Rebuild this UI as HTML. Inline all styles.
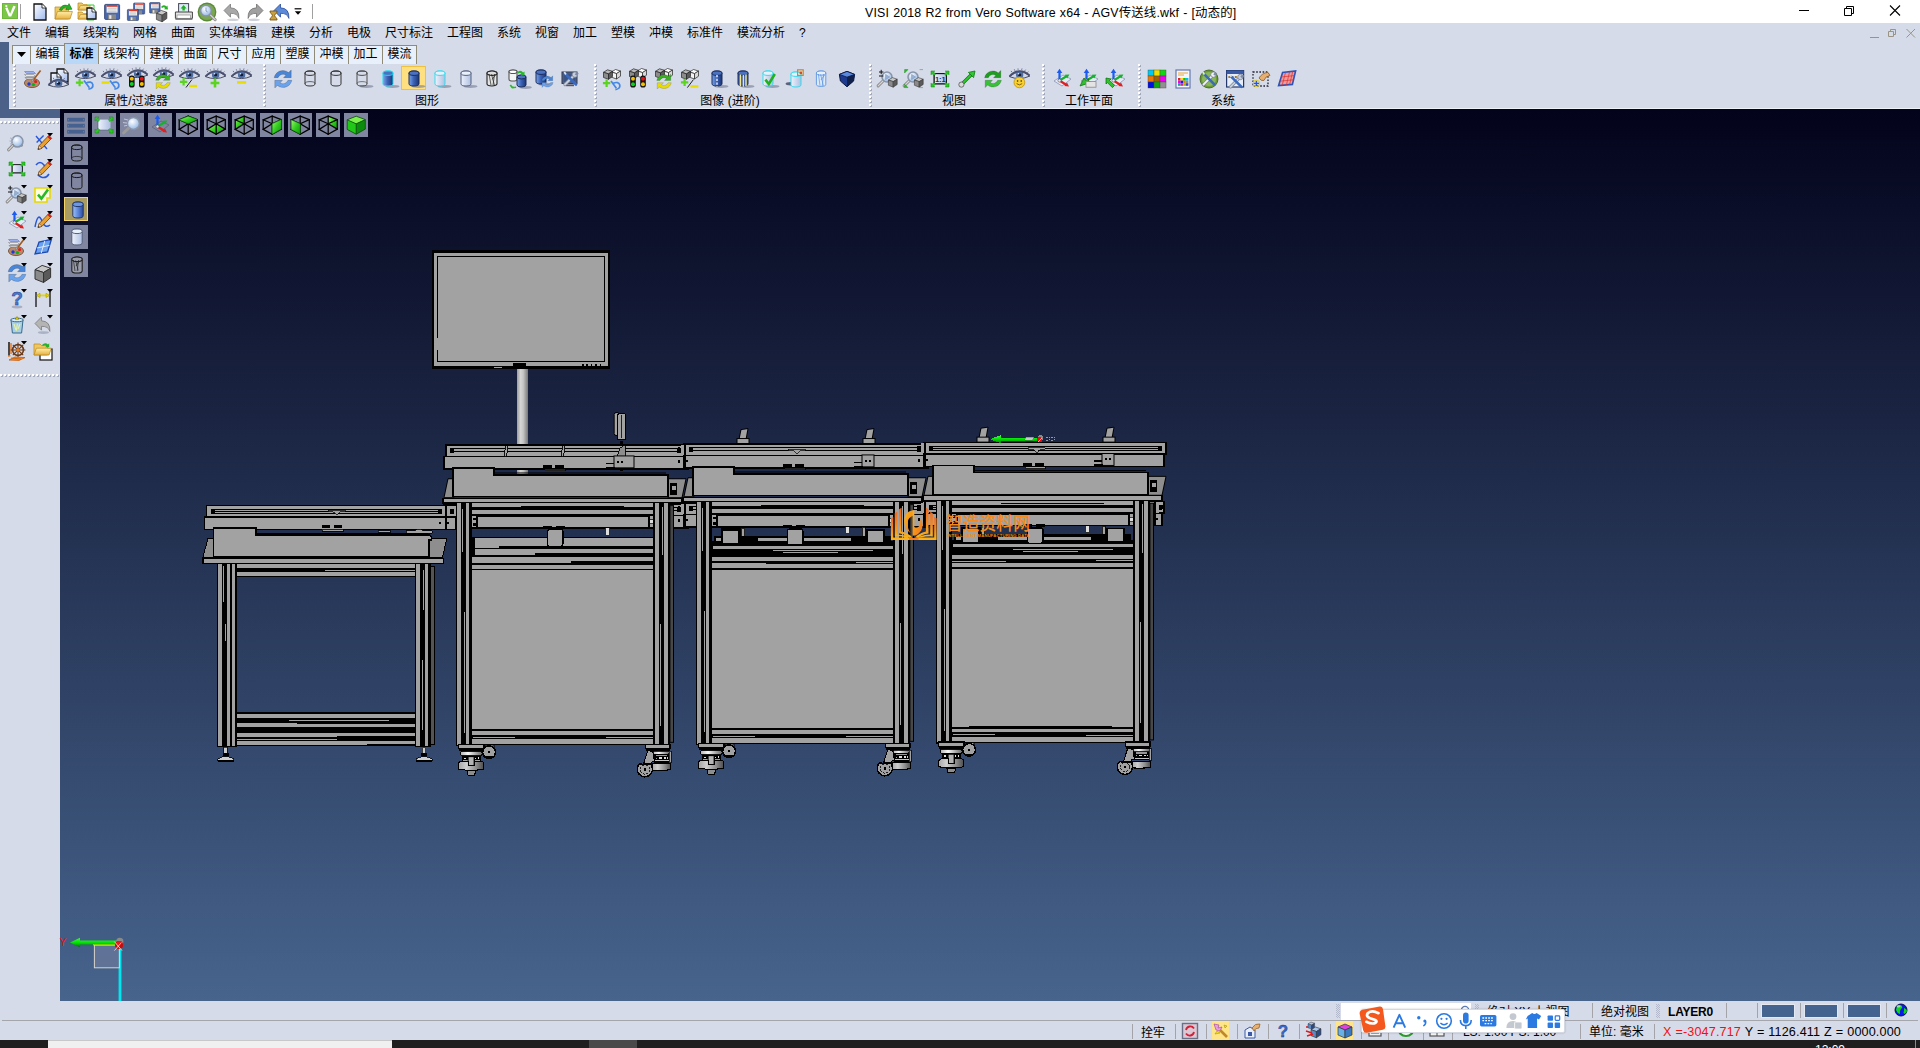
<!DOCTYPE html>
<html lang="zh-CN">
<head>
<meta charset="utf-8">
<title>VISI 2018 R2 from Vero Software x64 - AGV传送线.wkf - [动态的]</title>
<style>
*{box-sizing:border-box;margin:0;padding:0}
html,body{width:1920px;height:1048px;overflow:hidden;background:#d6dbe9;font-family:"Liberation Sans","Noto Sans CJK SC",sans-serif;font-size:12px;color:#000}
.abs{position:absolute}
svg{display:block;overflow:visible}
#title{left:0;top:0;width:1920px;height:23px;background:#fff}
#title .cap{position:absolute;left:865px;top:2.5px;font-size:12.4px;white-space:nowrap;letter-spacing:.18px;word-spacing:.4px}
#menubar{left:0;top:23px;width:1920px;height:21px;background:#d6dbe9}
#menubar span{position:absolute;top:1px;font-size:12px;line-height:18px;white-space:nowrap}
#blueL{left:0;top:42px;width:9px;height:76px;background:#4b6188}
#blueB{left:0;top:109px;width:60px;height:9px;background:#4b6188}
.tab{position:absolute;top:44.5px;height:19.5px;background:#e8f0fb;border:1px solid #8f8b76;border-bottom:none;font-size:12px;text-align:center;line-height:17px;white-space:nowrap}
.tab.act{top:42.5px;height:21.5px;background:#b9d8f8;font-weight:bold;line-height:20px}
#toolbar{left:9px;top:64px;width:1911px;height:45px;background:#d6dbe9;border-bottom:1px solid #eef1f8}
.glabel{position:absolute;top:93px;font-size:12px;line-height:16px;white-space:nowrap;transform:translateX(-50%)}
.gripv{position:absolute;top:64px;width:3px;height:44px;background:repeating-linear-gradient(to bottom,#fff 0 2px,transparent 2px 4px) 0 0/2px 100% no-repeat,repeating-linear-gradient(to bottom,transparent 0 1px,#a4a9ba 1px 3px,transparent 3px 4px) 1px 0/2px 100% no-repeat}
.griph{position:absolute;left:0;width:59px;height:3px;background:repeating-linear-gradient(to right,#fff 0 2px,transparent 2px 4px) 0 0/100% 2px no-repeat,repeating-linear-gradient(to right,transparent 0 1px,#a4a9ba 1px 3px,transparent 3px 4px) 0 1px/100% 2px no-repeat}
.ico{position:absolute;width:20px;height:20px}
#viewport{left:60px;top:109px;width:1860px;height:892px;background:linear-gradient(to bottom,#03031b 0%,#47648d 100%)}
.vbtn{position:absolute;width:24px;height:24px;background:#8085a0}
.vbtn.on{background:#a89c62;border:1px solid #f4d468}
#leftpanel{left:0;top:118px;width:60px;height:883px;background:#d6dbe9}
#status{left:0;top:1000px;width:1920px;height:40px;background:linear-gradient(to bottom,transparent 1px,#d6dbe9 1px)}
#status .t{position:absolute;font-size:12px;line-height:16px;white-space:nowrap}
#status .sep{position:absolute;width:1px;height:15px;background:#a3a3a8}
#taskbar{left:0;top:1040px;width:1920px;height:8px;background:#1f1f1f}
</style>
</head>
<body>
<svg width="0" height="0" style="position:absolute;left:0;top:0" aria-hidden="true"><defs><linearGradient id="gb" x1="0" x2="1"><stop offset="0" stop-color="#7aa4e8"/><stop offset=".45" stop-color="#3c64b8"/><stop offset="1" stop-color="#1c3474"/></linearGradient><linearGradient id="gb2" x1="0" x2="1"><stop offset="0" stop-color="#9cc0f8"/><stop offset=".5" stop-color="#5c88dc"/><stop offset="1" stop-color="#2a4a9c"/></linearGradient><linearGradient id="gl" x1="0" x2="1"><stop offset="0" stop-color="#eef3fc"/><stop offset="1" stop-color="#aebfe2"/></linearGradient><linearGradient id="gc" x1="0" x2="1" y1="0" y2="1"><stop offset="0" stop-color="#9cf870"/><stop offset=".5" stop-color="#34cc20"/><stop offset="1" stop-color="#0a9a0a"/></linearGradient><linearGradient id="gdoc" x1="0" x2="1" y1="0" y2="1"><stop offset="0" stop-color="#fff"/><stop offset="1" stop-color="#9cb8ee"/></linearGradient><linearGradient id="gfold" x1="0" x2="0" y1="0" y2="1"><stop offset="0" stop-color="#fff0a8"/><stop offset="1" stop-color="#e8b040"/></linearGradient><radialGradient id="glens" cx=".4" cy=".35" r=".7"><stop offset="0" stop-color="#fff"/><stop offset="1" stop-color="#8fb4e4"/></radialGradient></defs></svg>
<div id="title" class="abs"><svg class="abs" style="left:2px;top:3px" width="16" height="16" viewBox="0 0 17 17"><rect width="17" height="17" fill="#6cb83a"/><rect x="1" y="1" width="15" height="15" fill="#7cc648"/><path d="M3.4 5.4 l2.4 -.6 l2.8 6.6 l3.4 -8.4 l2.6 .8 l-4.8 10.6 h-2.6z" fill="#fff"/><circle cx="4.6" cy="3.2" r="1.2" fill="#fff"/></svg><div class="abs" style="left:20px;top:4px;width:1px;height:15px;background:#a0a0a0"></div><div class="ico" style="left:29.5px;top:1.5px"><svg width="20" height="20" viewBox="0 0 20 20"><path d="M4 2 h8 l4 4 v12 h-12z" fill="url(#gdoc)" stroke="#111" stroke-width="1.3"/><path d="M12 2 v4 h4" fill="#fff" stroke="#111" stroke-width=".8"/></svg></div><div class="ico" style="left:54px;top:1.5px"><svg width="20" height="20" viewBox="0 0 20 20"><path d="M1 17 v-12 h6.0 l1.5 1.6 h6.0 v10.4z" fill="#f0c860" stroke="#b88820" stroke-width=".7"/><path d="M1 17 l2.4 -7.4399999999999995 h15 l-2.4 7.4399999999999995z" fill="url(#gfold)" stroke="#b88820" stroke-width=".7"/><path d="M5.4 8 q2.4 -6.4 8.6 -4.4 l1 -2 l3 5.6 l-6.2 .6 l1 -2 q-3.6 -1 -5 2.6z" fill="#28b028" stroke="#0a6a0a" stroke-width=".5"/></svg></div><div class="ico" style="left:78px;top:1.5px"><svg width="20" height="20" viewBox="0 0 20 20"><path d="M0 8 v-7 h4.0 l1.5 1.6 h3.5 v5.4z" fill="#f0c860" stroke="#b88820" stroke-width=".7"/><path d="M0 8 l2.4 -4.34 h10 l-2.4 4.34z" fill="url(#gfold)" stroke="#b88820" stroke-width=".7"/><path d="M0 17 v-7 h4.0 l1.5 1.6 h3.5 v5.4z" fill="#f0c860" stroke="#b88820" stroke-width=".7"/><path d="M0 17 l2.4 -4.34 h10 l-2.4 4.34z" fill="url(#gfold)" stroke="#b88820" stroke-width=".7"/><path d="M9 3 h7 v15 h-7" fill="none" stroke="#38c838" stroke-width="1"/><path d="M9 6 h5 l4 4 v7 h-9z" fill="url(#gdoc)" stroke="#111" stroke-width="1.3"/><path d="M14 6 v4 h4" fill="#fff" stroke="#111" stroke-width=".8"/></svg></div><div class="ico" style="left:101.5px;top:1.5px"><svg width="20" height="20" viewBox="0 0 20 20"><g transform="translate(2.6 2.4) scale(1)"><rect x="0" y="0" width="15" height="15" rx="1" fill="#4868b0" stroke="#24386c" stroke-width=".8"/><rect x="2" y=".6" width="11" height="7.6" fill="#f4f4f4"/><rect x="2" y=".6" width="11" height="1.8" fill="#e03828"/><path d="M3 4 h9 M3 5.6 h9 M3 7.2 h9" stroke="#b0b0b0" stroke-width=".6"/><rect x="3.4" y="10" width="8" height="5" fill="#888"/><rect x="4.6" y="10.8" width="2.2" height="3.6" fill="#e8e8e8"/></g></svg></div><div class="ico" style="left:126px;top:1.5px"><svg width="20" height="20" viewBox="0 0 20 20"><g transform="translate(7.6 1) scale(0.74)"><rect x="0" y="0" width="15" height="15" rx="1" fill="#4868b0" stroke="#24386c" stroke-width=".8"/><rect x="2" y=".6" width="11" height="7.6" fill="#f4f4f4"/><rect x="2" y=".6" width="11" height="1.8" fill="#e03828"/><path d="M3 4 h9 M3 5.6 h9 M3 7.2 h9" stroke="#b0b0b0" stroke-width=".6"/><rect x="3.4" y="10" width="8" height="5" fill="#888"/><rect x="4.6" y="10.8" width="2.2" height="3.6" fill="#e8e8e8"/></g><g transform="translate(1.4 7.4) scale(0.74)"><rect x="0" y="0" width="15" height="15" rx="1" fill="#4868b0" stroke="#24386c" stroke-width=".8"/><rect x="2" y=".6" width="11" height="7.6" fill="#f4f4f4"/><rect x="2" y=".6" width="11" height="1.8" fill="#e03828"/><path d="M3 4 h9 M3 5.6 h9 M3 7.2 h9" stroke="#b0b0b0" stroke-width=".6"/><rect x="3.4" y="10" width="8" height="5" fill="#888"/><rect x="4.6" y="10.8" width="2.2" height="3.6" fill="#e8e8e8"/></g></svg></div><div class="ico" style="left:149px;top:1.5px"><svg width="20" height="20" viewBox="0 0 20 20"><g transform="translate(0.6 0.6) scale(0.7)"><rect x="0" y="0" width="15" height="15" rx="1" fill="#4868b0" stroke="#24386c" stroke-width=".8"/><rect x="2" y=".6" width="11" height="7.6" fill="#f4f4f4"/><rect x="2" y=".6" width="11" height="1.8" fill="#e03828"/><path d="M3 4 h9 M3 5.6 h9 M3 7.2 h9" stroke="#b0b0b0" stroke-width=".6"/><rect x="3.4" y="10" width="8" height="5" fill="#888"/><rect x="4.6" y="10.8" width="2.2" height="3.6" fill="#e8e8e8"/></g><g transform="translate(7.4 8.4) scale(0.95)"><path d="M0 3 l5 -3 l6 2 l-5 3z" fill="#c8c8c8" stroke="#333" stroke-width=".7"/><path d="M0 3 l6 2 v7 l-6 -2.4z" fill="#8a8a8a" stroke="#333" stroke-width=".7"/><path d="M6 5 l5 -3 v6.6 l-5 3.4z" fill="#5a5a5a" stroke="#333" stroke-width=".7"/></g><path d="M12 5 q2.4 -3.4 5.6 -.4 l.8 -1.2 l.6 4 l-4 -.2 l1.2 -1.2 q-1.6 -1.6 -3 0z" fill="#28b028"/></svg></div><div class="ico" style="left:174px;top:1.5px"><svg width="20" height="20" viewBox="0 0 20 20"><rect x="4.6" y="1.6" width="10" height="9" fill="#dceaf8" stroke="#445" stroke-width="1"/><path d="M9.6 3 l3 3.4 h-1.8 v2.2 h-2.4 v-2.2 h-1.8z" fill="#20b020"/><path d="M1.4 10 h17 v6.4 h-17z" fill="#e4e4e4" stroke="#444" stroke-width="1"/><rect x="3" y="13" width="13.4" height="3.2" fill="#fff" stroke="#666" stroke-width=".5"/><path d="M1.4 16.4 h17 v1.6 h-17z" fill="#888"/></svg></div><div class="ico" style="left:197px;top:1.5px"><svg width="20" height="20" viewBox="0 0 20 20"><circle cx="10" cy="10" r="9.4" fill="#5a8a38"/><circle cx="10" cy="10" r="8" fill="#7aa850"/><path d="M12.78 12.379999999999999 l5.4 5.4" stroke="#8a8a8a" stroke-width="3" stroke-linecap="round"/><path d="M12.78 12.379999999999999 l5.4 5.4" stroke="#d8d8d8" stroke-width="1.2" stroke-linecap="round"/><circle cx="9" cy="8.6" r="5.4" fill="url(#glens)" stroke="#8894a8" stroke-width="1.5"/><path d="M9 5.6 v3.4 l1.6 1" stroke="#6a8ab4" stroke-width=".8" fill="none"/></svg></div><div class="ico" style="left:222px;top:1.5px"><svg width="20" height="20" viewBox="0 0 20 20"><ellipse cx="11" cy="17.8" rx="6" ry="1.3" fill="#a0a4b4" opacity=".5"/><g><path d="M2 8.5 l6.5 -6.5 v3.8 q9 .4 8.4 10.6 q-1.6 -5.4 -8.4 -5 v3.8z" fill="#a8a8a8" stroke="#787878" stroke-width=".8"/></g></svg></div><div class="ico" style="left:244.5px;top:1.5px"><svg width="20" height="20" viewBox="0 0 20 20"><ellipse cx="9" cy="17.8" rx="6" ry="1.3" fill="#a0a4b4" opacity=".5"/><g transform="translate(20 0) scale(-1 1)"><path d="M2 8.5 l6.5 -6.5 v3.8 q9 .4 8.4 10.6 q-1.6 -5.4 -8.4 -5 v3.8z" fill="#a0a0a0" stroke="#707070" stroke-width=".8"/></g></svg></div><div class="ico" style="left:269px;top:1.5px"><svg width="20" height="20" viewBox="0 0 20 20"><g transform="translate(3 0)"><path d="M2 8.5 l6.5 -6.5 v3.8 q9 .4 8.4 10.6 q-1.6 -5.4 -8.4 -5 v3.8z" fill="#5a8ad8" stroke="#2a4a98" stroke-width=".8"/></g><path d="M1 9 h7 v1.4 q-2.4 2 -2.4 3 q0 1.4 2.4 3.2 v1.4 h-7 v-1.4 q2.4 -1.8 2.4 -3.2 q0 -1 -2.4 -3z" fill="#c8a040" stroke="#6a4a10" stroke-width=".8"/></svg></div><svg class="abs" style="left:294px;top:8px" width="8" height="8" viewBox="0 0 8 8"><path d="M.6 .8 h6.8" stroke="#000" stroke-width="1.2"/><path d="M.8 3.2 h6.4 l-3.2 3.6z" fill="#000"/></svg><div class="abs" style="left:312px;top:4px;width:1px;height:15px;background:#a0a0a0"></div><div class="cap">VISI 2018 R2 from Vero Software x64 - AGV传送线.wkf - [动态的]</div><svg class="abs" style="left:1790px;top:0" width="130" height="23" viewBox="0 0 130 23"><path d="M9 10.5 h10" stroke="#000" stroke-width="1"/><path d="M54.5 8.5 h7 v7 h-7z M56.5 8.5 v-2 h7 v7 h-2" fill="none" stroke="#000" stroke-width="1"/><path d="M100 5.5 l10 10 M110 5.5 l-10 10" stroke="#000" stroke-width="1.1"/></svg></div>
<div id="menubar" class="abs"><span style="left:7px">文件</span><span style="left:45px">编辑</span><span style="left:83px">线架构</span><span style="left:133px">网格</span><span style="left:171px">曲面</span><span style="left:209px">实体编辑</span><span style="left:271px">建模</span><span style="left:309px">分析</span><span style="left:347px">电极</span><span style="left:385px">尺寸标注</span><span style="left:447px">工程图</span><span style="left:497px">系统</span><span style="left:535px">视窗</span><span style="left:573px">加工</span><span style="left:611px">塑模</span><span style="left:649px">冲模</span><span style="left:687px">标准件</span><span style="left:737px">模流分析</span><span style="left:799px">?</span><svg class="abs" style="left:1866px;top:4px" width="50" height="14" viewBox="0 0 50 14"><path d="M4 10.5 h9" stroke="#9a9484" stroke-width="1"/><path d="M22.5 4.5 h5 v5 h-5z M24.5 4.500 v-2 h5 v5 h-2" fill="none" stroke="#9a9484" stroke-width="1"/><path d="M40.5 2 l8.500 8.500 M49 2 l-8.500 8.500" stroke="#9a9484" stroke-width="1"/></svg></div>
<div id="toolbar" class="abs"></div><div class="tab" style="left:12px;width:19px"><svg style="margin:6px auto 0" width="9" height="5" viewBox="0 0 9 5"><path d="M0 0 h9 l-4.5 5z" fill="#000"/></svg></div><div class="tab" style="left:30px;width:35px">编辑</div><div class="tab" style="left:98px;width:47px">线架构</div><div class="tab" style="left:144px;width:35px">建模</div><div class="tab" style="left:178px;width:35px">曲面</div><div class="tab" style="left:212px;width:35px">尺寸</div><div class="tab" style="left:246px;width:35px">应用</div><div class="tab" style="left:280px;width:35px">塑膜</div><div class="tab" style="left:314px;width:35px">冲模</div><div class="tab" style="left:348px;width:35px">加工</div><div class="tab" style="left:382px;width:35px">模流</div><div class="tab act" style="left:64px;width:35px">标准</div><div class="gripv" style="left:13px"></div><div class="gripv" style="left:263px"></div><div class="gripv" style="left:594px"></div><div class="gripv" style="left:869px"></div><div class="gripv" style="left:1042px"></div><div class="gripv" style="left:1138px"></div><div class="abs" style="left:401px;top:66px;width:25px;height:24px;background:#ffe080;border:1px solid #f0c040"></div><div class="ico" style="left:23px;top:68.6px"><svg width="20" height="20" viewBox="0 0 20 20"><g transform="translate(0 0)"><ellipse cx="9" cy="14" rx="7.6" ry="4.6" fill="#b88a6a" stroke="#6a4630" stroke-width=".8"/><circle cx="6" cy="15" r="1.7" fill="#1838e0"/><circle cx="10.4" cy="15.6" r="1.7" fill="#10b020"/><circle cx="12.6" cy="12.6" r="1.6" fill="#e02020"/><path d="M1.5 2.5 h9 l2 2 h-9z" fill="#9ab0f0" stroke="#5468b0" stroke-width=".5"/><path d="M1.5 5.5 h9 l2 2 h-9z" fill="#e8e8f0" stroke="#777" stroke-width=".5"/><path d="M2 8.5 h9 l2 2 h-9z" fill="#c8c8c8" stroke="#666" stroke-width=".5"/><path d="M9.5 12 L17.6 1.4" stroke="#a05a20" stroke-width="1.6"/><path d="M8.6 13.4 l2.2 -2.6 l-1.2 -.9z" fill="#e8e8e8" stroke="#555" stroke-width=".4"/></g></svg></div><div class="ico" style="left:49px;top:68.6px"><svg width="20" height="20" viewBox="0 0 20 20"><path d="M8 0 h7 l4 4 v9 h-11z" fill="url(#gdoc)" stroke="#111" stroke-width="1.3"/><path d="M15 0 v4 h4" fill="#fff" stroke="#111" stroke-width=".8"/><path d="M2 4 h6 l4 4 v8 h-10z" fill="url(#gdoc)" stroke="#111" stroke-width="1.3"/><path d="M8 4 v4 h4" fill="#fff" stroke="#111" stroke-width=".8"/><g transform="translate(-1.3 8.5) scale(1.0924999999999998 0.95)"><path d="M.6 8 Q10 -1.4 19.4 7.4 Q10 12.4 .6 8z" fill="#d4d8e6" stroke="#3a4058" stroke-width=".9"/><path d="M.8 7.6 Q9.6 -2.6 19 6.6" fill="none" stroke="#4a5070" stroke-width="1.9"/><path d="M3 3.4 l-.8 -1.400 M5.600 1.800 l-.5 -1.500 M8.600 .9 l-.1 -1.500 M11.800 .9 l.4 -1.500 M14.600 2 l.9 -1.300 M17 3.800 l1.100 -1" stroke="#4a5070" stroke-width=".7"/><circle cx="10" cy="6.2" r="3.4" fill="#4c6ca2"/><circle cx="10" cy="6.2" r="1.5" fill="#141c34"/><circle cx="8.9" cy="5.1" r=".8" fill="#dfe8ff"/></g></svg></div><div class="ico" style="left:75px;top:68.6px"><svg width="20" height="20" viewBox="0 0 20 20"><g transform="translate(-0.30000000000000004 0) scale(1.0924999999999998 0.95)"><path d="M.6 8 Q10 -1.4 19.4 7.4 Q10 12.4 .6 8z" fill="#d4d8e6" stroke="#3a4058" stroke-width=".9"/><path d="M.8 7.6 Q9.6 -2.6 19 6.6" fill="none" stroke="#4a5070" stroke-width="1.9"/><path d="M3 3.4 l-.8 -1.400 M5.600 1.800 l-.5 -1.500 M8.600 .9 l-.1 -1.500 M11.800 .9 l.4 -1.500 M14.600 2 l.9 -1.300 M17 3.800 l1.100 -1" stroke="#4a5070" stroke-width=".7"/><circle cx="10" cy="6.2" r="3.4" fill="#4c6ca2"/><circle cx="10" cy="6.2" r="1.5" fill="#141c34"/><circle cx="8.9" cy="5.1" r=".8" fill="#dfe8ff"/></g><path d="M0.8999999999999995 13.6 h7.4 M4.6 9.899999999999999 v7.4" stroke="#5ad41e" stroke-width="2.2" fill="none"/><path d="M10.6 14.2 q6 -2.800 7.200 1.400 q.6 3.800 -4.400 4.600" fill="none" stroke="#4488e4" stroke-width="1.700"/><path d="M9 11.6 l5.400 7.200" stroke="#4488e4" stroke-width="1.700"/></svg></div><div class="ico" style="left:101px;top:68.6px"><svg width="20" height="20" viewBox="0 0 20 20"><g transform="translate(-0.30000000000000004 0) scale(1.0924999999999998 0.95)"><path d="M.6 8 Q10 -1.4 19.4 7.4 Q10 12.4 .6 8z" fill="#d4d8e6" stroke="#3a4058" stroke-width=".9"/><path d="M.8 7.6 Q9.6 -2.6 19 6.6" fill="none" stroke="#4a5070" stroke-width="1.9"/><path d="M3 3.4 l-.8 -1.400 M5.600 1.800 l-.5 -1.500 M8.600 .9 l-.1 -1.500 M11.800 .9 l.4 -1.500 M14.600 2 l.9 -1.300 M17 3.800 l1.100 -1" stroke="#4a5070" stroke-width=".7"/><circle cx="10" cy="6.2" r="3.4" fill="#4c6ca2"/><circle cx="10" cy="6.2" r="1.5" fill="#141c34"/><circle cx="8.9" cy="5.1" r=".8" fill="#dfe8ff"/></g><path d="M0.5999999999999996 13.6 h8" stroke="#e8dc00" stroke-width="2.4" fill="none"/><path d="M10.6 14.2 q6 -2.800 7.200 1.400 q.6 3.800 -4.400 4.600" fill="none" stroke="#4488e4" stroke-width="1.700"/><path d="M9 11.6 l5.400 7.200" stroke="#4488e4" stroke-width="1.700"/></svg></div><div class="ico" style="left:127px;top:68.6px"><svg width="20" height="20" viewBox="0 0 20 20"><g transform="translate(-0.30000000000000004 -1) scale(1.0924999999999998 0.95)"><path d="M.6 8 Q10 -1.4 19.4 7.4 Q10 12.4 .6 8z" fill="#d4d8e6" stroke="#3a4058" stroke-width=".9"/><path d="M.8 7.6 Q9.6 -2.6 19 6.6" fill="none" stroke="#4a5070" stroke-width="1.9"/><path d="M3 3.4 l-.8 -1.400 M5.600 1.800 l-.5 -1.500 M8.600 .9 l-.1 -1.500 M11.800 .9 l.4 -1.500 M14.600 2 l.9 -1.300 M17 3.800 l1.100 -1" stroke="#4a5070" stroke-width=".7"/><circle cx="10" cy="6.2" r="3.4" fill="#4c6ca2"/><circle cx="10" cy="6.2" r="1.5" fill="#141c34"/><circle cx="8.9" cy="5.1" r=".8" fill="#dfe8ff"/></g><rect x="2" y="6.5" width="5.6" height="12" rx="2.6" fill="#111"/><circle cx="4.8" cy="9.7" r="2" fill="#f4c000"/><circle cx="4.8" cy="15.1" r="2" fill="#10d020"/><rect x="12" y="6.5" width="5.6" height="12" rx="2.6" fill="#111"/><circle cx="14.8" cy="9.7" r="2" fill="#e81010"/><circle cx="14.8" cy="15.1" r="2" fill="#f4c000"/></svg></div><div class="ico" style="left:153px;top:68.6px"><svg width="20" height="20" viewBox="0 0 20 20"><g transform="translate(-0.30000000000000004 -1) scale(1.0924999999999998 0.95)"><path d="M.6 8 Q10 -1.4 19.4 7.4 Q10 12.4 .6 8z" fill="#d4d8e6" stroke="#3a4058" stroke-width=".9"/><path d="M.8 7.6 Q9.6 -2.6 19 6.6" fill="none" stroke="#4a5070" stroke-width="1.9"/><path d="M3 3.4 l-.8 -1.400 M5.600 1.800 l-.5 -1.500 M8.600 .9 l-.1 -1.500 M11.800 .9 l.4 -1.500 M14.600 2 l.9 -1.300 M17 3.800 l1.100 -1" stroke="#4a5070" stroke-width=".7"/><circle cx="10" cy="6.2" r="3.4" fill="#4c6ca2"/><circle cx="10" cy="6.2" r="1.5" fill="#141c34"/><circle cx="8.9" cy="5.1" r=".8" fill="#dfe8ff"/></g><g transform="translate(10 12.5) scale(0.868) translate(-10 -10)"><path d="M1.6 8.7 A8.5 8.5 0 0 1 15.3 3.9 L17.8 1.4 V8.7 H10.5 L12.8 6.4 A5 5 0 0 0 5.3 8.7z" fill="#3ab020" stroke="#00000055" stroke-width=".5"/><path d="M1.6 8.7 A8.5 8.5 0 0 1 15.3 3.9 L17.8 1.4 V8.7 H10.5 L12.8 6.4 A5 5 0 0 0 5.3 8.7z" fill="#e8dc00" stroke="#00000055" stroke-width=".5" transform="rotate(180 10 10)"/></g></svg></div><div class="ico" style="left:179px;top:68.6px"><svg width="20" height="20" viewBox="0 0 20 20"><g transform="translate(-0.30000000000000004 0) scale(1.0924999999999998 0.95)"><path d="M.6 8 Q10 -1.4 19.4 7.4 Q10 12.4 .6 8z" fill="#d4d8e6" stroke="#3a4058" stroke-width=".9"/><path d="M.8 7.6 Q9.6 -2.6 19 6.6" fill="none" stroke="#4a5070" stroke-width="1.9"/><path d="M3 3.4 l-.8 -1.400 M5.600 1.800 l-.5 -1.500 M8.600 .9 l-.1 -1.500 M11.800 .9 l.4 -1.500 M14.600 2 l.9 -1.300 M17 3.800 l1.100 -1" stroke="#4a5070" stroke-width=".7"/><circle cx="10" cy="6.2" r="3.4" fill="#4c6ca2"/><circle cx="10" cy="6.2" r="1.5" fill="#141c34"/><circle cx="8.9" cy="5.1" r=".8" fill="#dfe8ff"/></g><path d="M0.8999999999999995 12.8 h7.4 M4.6 9.100000000000001 v7.4" stroke="#5ad41e" stroke-width="2.2" fill="none"/><path d="M10 17 h8" stroke="#e8dc00" stroke-width="2.4" fill="none"/><path d="M7 18.5 l6 -8" stroke="#222" stroke-width="1"/></svg></div><div class="ico" style="left:205px;top:68.6px"><svg width="20" height="20" viewBox="0 0 20 20"><g transform="translate(-0.30000000000000004 0) scale(1.0924999999999998 0.95)"><path d="M.6 8 Q10 -1.4 19.4 7.4 Q10 12.4 .6 8z" fill="#d4d8e6" stroke="#3a4058" stroke-width=".9"/><path d="M.8 7.6 Q9.6 -2.6 19 6.6" fill="none" stroke="#4a5070" stroke-width="1.9"/><path d="M3 3.4 l-.8 -1.400 M5.600 1.800 l-.5 -1.500 M8.600 .9 l-.1 -1.500 M11.800 .9 l.4 -1.500 M14.600 2 l.9 -1.300 M17 3.800 l1.100 -1" stroke="#4a5070" stroke-width=".7"/><circle cx="10" cy="6.2" r="3.4" fill="#4c6ca2"/><circle cx="10" cy="6.2" r="1.5" fill="#141c34"/><circle cx="8.9" cy="5.1" r=".8" fill="#dfe8ff"/></g><path d="M5.6 14 h8.8 M10 9.6 v8.8" stroke="#5ad41e" stroke-width="2.6" fill="none"/></svg></div><div class="ico" style="left:231px;top:68.6px"><svg width="20" height="20" viewBox="0 0 20 20"><g transform="translate(-0.30000000000000004 0) scale(1.0924999999999998 0.95)"><path d="M.6 8 Q10 -1.4 19.4 7.4 Q10 12.4 .6 8z" fill="#d4d8e6" stroke="#3a4058" stroke-width=".9"/><path d="M.8 7.6 Q9.6 -2.6 19 6.6" fill="none" stroke="#4a5070" stroke-width="1.9"/><path d="M3 3.4 l-.8 -1.400 M5.600 1.800 l-.5 -1.500 M8.600 .9 l-.1 -1.500 M11.800 .9 l.4 -1.500 M14.600 2 l.9 -1.300 M17 3.800 l1.100 -1" stroke="#4a5070" stroke-width=".7"/><circle cx="10" cy="6.2" r="3.4" fill="#4c6ca2"/><circle cx="10" cy="6.2" r="1.5" fill="#141c34"/><circle cx="8.9" cy="5.1" r=".8" fill="#dfe8ff"/></g><path d="M6.0 13.4 h9.2" stroke="#e8dc00" stroke-width="2.6" fill="none"/></svg></div><div class="glabel" style="left:136px">属性/过滤器</div><div class="ico" style="left:273px;top:68.6px"><svg width="20" height="20" viewBox="0 0 20 20"><g transform="translate(10 10) scale(1.053) translate(-10 -10)"><path d="M1.6 8.7 A8.5 8.5 0 0 1 15.3 3.9 L17.8 1.4 V8.7 H10.5 L12.8 6.4 A5 5 0 0 0 5.3 8.7z" fill="#4a86d8" stroke="#00000055" stroke-width=".5"/><path d="M1.6 8.7 A8.5 8.5 0 0 1 15.3 3.9 L17.8 1.4 V8.7 H10.5 L12.8 6.4 A5 5 0 0 0 5.3 8.7z" fill="#6aa2ec" stroke="#00000055" stroke-width=".5" transform="rotate(180 10 10)"/></g></svg></div><div class="ico" style="left:300px;top:68.6px"><svg width="20" height="20" viewBox="0 0 20 20"><path d="M5 4.2 v10.6 a5.0 2.2 0 0 0 10 0 v-10.6 a5.0 2.2 0 0 0 -10 0z" fill="none" stroke="#2a2a2a" stroke-width="0.95"/><ellipse cx="10.0" cy="4.2" rx="5.0" ry="2.2" fill="none" stroke="#2a2a2a" stroke-width="0.95"/><path d="M5 14.8 a5.0 2.2 0 0 1 10 0" fill="none" stroke="#2a2a2a" stroke-width="0.6649999999999999"/></svg></div><div class="ico" style="left:326px;top:68.6px"><svg width="20" height="20" viewBox="0 0 20 20"><path d="M5 4.2 v10.6 a5.0 2.2 0 0 0 10 0 v-10.6 a5.0 2.2 0 0 0 -10 0z" fill="none" stroke="#2a2a2a" stroke-width="0.95"/><ellipse cx="10.0" cy="4.2" rx="5.0" ry="2.2" fill="none" stroke="#2a2a2a" stroke-width="0.95"/></svg></div><div class="ico" style="left:352px;top:68.6px"><svg width="20" height="20" viewBox="0 0 20 20"><ellipse cx="14.5" cy="17.4" rx="7.0" ry="1.5" fill="#6a7088" opacity=".55"/><path d="M5 4.2 v10.6 a5.0 2.2 0 0 0 10 0 v-10.6 a5.0 2.2 0 0 0 -10 0z" fill="none" stroke="#444" stroke-width="0.95"/><ellipse cx="10.0" cy="4.2" rx="5.0" ry="2.2" fill="none" stroke="#444" stroke-width="0.95"/><path d="M5 14.8 a5.0 2.2 0 0 1 10 0" fill="none" stroke="#444" stroke-width="0.6649999999999999"/></svg></div><div class="ico" style="left:378px;top:68.6px"><svg width="20" height="20" viewBox="0 0 20 20"><ellipse cx="14.5" cy="17.4" rx="7.0" ry="1.5" fill="#6a7088" opacity=".55"/><path d="M5 4.2 v10.6 a5.0 2.2 0 0 0 10 0 v-10.6 a5.0 2.2 0 0 0 -10 0z" fill="url(#gb)" stroke="#18dcf0" stroke-width="1.0"/><ellipse cx="10.0" cy="4.2" rx="5.0" ry="2.2" fill="#4a72c0" stroke="#18dcf0" stroke-width="1.0"/></svg></div><div class="ico" style="left:403.5px;top:68.6px"><svg width="20" height="20" viewBox="0 0 20 20"><ellipse cx="14.5" cy="17.4" rx="7.0" ry="1.5" fill="#6a7088" opacity=".55"/><path d="M5 4.2 v10.6 a5.0 2.2 0 0 0 10 0 v-10.6 a5.0 2.2 0 0 0 -10 0z" fill="url(#gb)" stroke="#1a2c5c" stroke-width="1.0"/><ellipse cx="10.0" cy="4.2" rx="5.0" ry="2.2" fill="#4a72c0" stroke="#1a2c5c" stroke-width="1.0"/></svg></div><div class="ico" style="left:430px;top:68.6px"><svg width="20" height="20" viewBox="0 0 20 20"><ellipse cx="14.5" cy="17.4" rx="7.0" ry="1.5" fill="#6a7088" opacity=".55"/><path d="M5 4.2 v10.6 a5.0 2.2 0 0 0 10 0 v-10.6 a5.0 2.2 0 0 0 -10 0z" fill="url(#gl)" stroke="#30dcec" stroke-width="1.0"/><ellipse cx="10.0" cy="4.2" rx="5.0" ry="2.2" fill="#e8f0fc" stroke="#30dcec" stroke-width="1.0"/></svg></div><div class="ico" style="left:456px;top:68.6px"><svg width="20" height="20" viewBox="0 0 20 20"><ellipse cx="14.5" cy="17.4" rx="7.0" ry="1.5" fill="#6a7088" opacity=".55"/><path d="M5 4.2 v10.6 a5.0 2.2 0 0 0 10 0 v-10.6 a5.0 2.2 0 0 0 -10 0z" fill="url(#gl)" stroke="#55607c" stroke-width="1.0"/><ellipse cx="10.0" cy="4.2" rx="5.0" ry="2.2" fill="#e8f0fc" stroke="#55607c" stroke-width="1.0"/></svg></div><div class="ico" style="left:482px;top:68.6px"><svg width="20" height="20" viewBox="0 0 20 20"><path d="M5 4.2 v10.6 a5.0 2.2 0 0 0 10 0 v-10.6 a5.0 2.2 0 0 0 -10 0z" fill="#e4e4e4" stroke="#222" stroke-width="1.1"/><ellipse cx="10.0" cy="4.2" rx="5.0" ry="2.2" fill="#ddd" stroke="#222" stroke-width="1.1"/><path d="M7 5 l2 11 M9.5 5.4 l3 11 M12.6 5 l-1.6 11.4 M13.8 5.4 l-3.6 5" stroke="#222" stroke-width=".7" fill="none"/></svg></div><div class="ico" style="left:508px;top:68.6px"><svg width="20" height="20" viewBox="0 0 20 20"><path d="M1 2.76 v7.48 a4.0 1.76 0 0 0 8 0 v-7.48 a4.0 1.76 0 0 0 -8 0z" fill="#f4f4f4" stroke="#555" stroke-width="1.1"/><ellipse cx="5.0" cy="2.76" rx="4.0" ry="1.76" fill="#fff" stroke="#555" stroke-width="1.1"/><ellipse cx="17.549999999999997" cy="18.4" rx="6.3" ry="1.5" fill="#6a7088" opacity=".55"/><path d="M9 7.98 v8.04 a4.5 1.98 0 0 0 9 0 v-8.04 a4.5 1.98 0 0 0 -9 0z" fill="url(#gb)" stroke="#1a2c5c" stroke-width="1.0"/><ellipse cx="13.5" cy="7.98" rx="4.5" ry="1.98" fill="#4a72c0" stroke="#1a2c5c" stroke-width="1.0"/><path d="M9.5 3 q3.4 -2.8 5.6 .6 l1.4 -1 v4 h-4 l1.2 -1.2 q-1.4 -2.2 -3.6 -.8z" fill="#28b828"/><path d="M3 15.4 q1.4 3.4 5 2 l.2 1.6 l-4.2 .6 l-2.4 -3.2z" fill="#28b828"/></svg></div><div class="ico" style="left:534px;top:68.6px"><svg width="20" height="20" viewBox="0 0 20 20"><ellipse cx="11.5" cy="15.4" rx="7.0" ry="1.5" fill="#6a7088" opacity=".55"/><path d="M2 3.2 v9.6 a5.0 2.2 0 0 0 10 0 v-9.6 a5.0 2.2 0 0 0 -10 0z" fill="url(#gb)" stroke="#1a2c5c" stroke-width="1.0"/><ellipse cx="7.0" cy="3.2" rx="5.0" ry="2.2" fill="#4a72c0" stroke="#1a2c5c" stroke-width="1.0"/><g transform="translate(13.4 12.6) scale(0.684) translate(-10 -10)"><path d="M1.6 8.7 A8.5 8.5 0 0 1 15.3 3.9 L17.8 1.4 V8.7 H10.5 L12.8 6.4 A5 5 0 0 0 5.3 8.7z" fill="#4a86d8" stroke="#00000055" stroke-width=".5"/><path d="M1.6 8.7 A8.5 8.5 0 0 1 15.3 3.9 L17.8 1.4 V8.7 H10.5 L12.8 6.4 A5 5 0 0 0 5.3 8.7z" fill="#6aa2ec" stroke="#00000055" stroke-width=".5" transform="rotate(180 10 10)"/></g></svg></div><div class="ico" style="left:560px;top:68.6px"><svg width="20" height="20" viewBox="0 0 20 20"><rect x="2" y="3" width="15" height="11.4" fill="#5a6a88" stroke="#2a3450" stroke-width="1"/><rect x="3.4" y="4.4" width="12.2" height="8.6" fill="#3c5484"/><rect x="6" y="15.4" width="8" height="1.8" fill="#556"/><path d="M5.0 15.5 L14.5 6" stroke="#7a8496" stroke-width="3.2" stroke-linecap="round"/><path d="M5.0 15.5 L14.5 6" stroke="#c8d0dc" stroke-width="1.8" stroke-linecap="round"/><circle cx="14.9" cy="5.6" r="2.7" fill="#c8d0dc" stroke="#7a8496" stroke-width=".8"/><rect x="14.5" y="2.2" width="2.4" height="3.2" fill="#7a8aa8" transform="rotate(45 14.9 5.6)"/><path d="M16.0 15.5 L5.9 5.4" stroke="#3a6ac0" stroke-width="2.6" stroke-linecap="round"/><path d="M5.9 5.4 l-1.6 -2.4" stroke="#dfe4ec" stroke-width="1.8"/></svg></div><div class="glabel" style="left:427px">图形</div><div class="ico" style="left:602px;top:68.6px"><svg width="20" height="20" viewBox="0 0 20 20"><g transform="translate(0 0)"><path d="M9.5 3.0 l4 -2.5 l5 1.5 l-4 2.6z" fill="#fff" stroke="#222" stroke-width=".7"/><path d="M9.5 3.0 l5 1.6 v5.4 l-5 -1.8z" fill="#f4f4f4" stroke="#222" stroke-width=".7"/><path d="M14.5 4.6 l4 -2.6 v5.2 l-4 2.8z" fill="#d8d8d8" stroke="#222" stroke-width=".7"/><path d="M1.5 3.3 l4 -2.5 l5 1.5 l-4 2.6z" fill="#b8b8b8" stroke="#222" stroke-width=".7"/><path d="M1.5 3.3 l5 1.6 v5.4 l-5 -1.8z" fill="#8c8c8c" stroke="#222" stroke-width=".7"/><path d="M6.5 4.8999999999999995 l4 -2.6 v5.2 l-4 2.8z" fill="#5c5c5c" stroke="#222" stroke-width=".7"/></g><path d="M0.8999999999999995 14.2 h7.4 M4.6 10.5 v7.4" stroke="#5ad41e" stroke-width="2.2" fill="none"/><path d="M10.6 14.6 q6 -2.800 7.200 1.400 q.6 3.800 -4.400 4.600" fill="none" stroke="#4488e4" stroke-width="1.700"/><path d="M9 12.0 l5.400 7.200" stroke="#4488e4" stroke-width="1.700"/></svg></div><div class="ico" style="left:628px;top:68.6px"><svg width="20" height="20" viewBox="0 0 20 20"><g transform="translate(0 -1)"><path d="M9.5 3.0 l4 -2.5 l5 1.5 l-4 2.6z" fill="#fff" stroke="#222" stroke-width=".7"/><path d="M9.5 3.0 l5 1.6 v5.4 l-5 -1.8z" fill="#f4f4f4" stroke="#222" stroke-width=".7"/><path d="M14.5 4.6 l4 -2.6 v5.2 l-4 2.8z" fill="#d8d8d8" stroke="#222" stroke-width=".7"/><path d="M1.5 3.3 l4 -2.5 l5 1.5 l-4 2.6z" fill="#b8b8b8" stroke="#222" stroke-width=".7"/><path d="M1.5 3.3 l5 1.6 v5.4 l-5 -1.8z" fill="#8c8c8c" stroke="#222" stroke-width=".7"/><path d="M6.5 4.8999999999999995 l4 -2.6 v5.2 l-4 2.8z" fill="#5c5c5c" stroke="#222" stroke-width=".7"/></g><rect x="2.2" y="6.6" width="5.6" height="12" rx="2.6" fill="#111"/><circle cx="5.0" cy="9.8" r="2" fill="#f4c000"/><circle cx="5.0" cy="15.2" r="2" fill="#10d020"/><rect x="12.2" y="6.6" width="5.6" height="12" rx="2.6" fill="#111"/><circle cx="15.0" cy="9.8" r="2" fill="#e81010"/><circle cx="15.0" cy="15.2" r="2" fill="#f4c000"/></svg></div><div class="ico" style="left:654px;top:68.6px"><svg width="20" height="20" viewBox="0 0 20 20"><g transform="translate(0 -1)"><path d="M9.5 3.0 l4 -2.5 l5 1.5 l-4 2.6z" fill="#fff" stroke="#222" stroke-width=".7"/><path d="M9.5 3.0 l5 1.6 v5.4 l-5 -1.8z" fill="#f4f4f4" stroke="#222" stroke-width=".7"/><path d="M14.5 4.6 l4 -2.6 v5.2 l-4 2.8z" fill="#d8d8d8" stroke="#222" stroke-width=".7"/><path d="M1.5 3.3 l4 -2.5 l5 1.5 l-4 2.6z" fill="#b8b8b8" stroke="#222" stroke-width=".7"/><path d="M1.5 3.3 l5 1.6 v5.4 l-5 -1.8z" fill="#8c8c8c" stroke="#222" stroke-width=".7"/><path d="M6.5 4.8999999999999995 l4 -2.6 v5.2 l-4 2.8z" fill="#5c5c5c" stroke="#222" stroke-width=".7"/></g><g transform="translate(10 12.6) scale(0.868) translate(-10 -10)"><path d="M1.6 8.7 A8.5 8.5 0 0 1 15.3 3.9 L17.8 1.4 V8.7 H10.5 L12.8 6.4 A5 5 0 0 0 5.3 8.7z" fill="#3ab020" stroke="#00000055" stroke-width=".5"/><path d="M1.6 8.7 A8.5 8.5 0 0 1 15.3 3.9 L17.8 1.4 V8.7 H10.5 L12.8 6.4 A5 5 0 0 0 5.3 8.7z" fill="#e8dc00" stroke="#00000055" stroke-width=".5" transform="rotate(180 10 10)"/></g></svg></div><div class="ico" style="left:680px;top:68.6px"><svg width="20" height="20" viewBox="0 0 20 20"><g transform="translate(0 0)"><path d="M9.5 3.0 l4 -2.5 l5 1.5 l-4 2.6z" fill="#fff" stroke="#222" stroke-width=".7"/><path d="M9.5 3.0 l5 1.6 v5.4 l-5 -1.8z" fill="#f4f4f4" stroke="#222" stroke-width=".7"/><path d="M14.5 4.6 l4 -2.6 v5.2 l-4 2.8z" fill="#d8d8d8" stroke="#222" stroke-width=".7"/><path d="M1.5 3.3 l4 -2.5 l5 1.5 l-4 2.6z" fill="#b8b8b8" stroke="#222" stroke-width=".7"/><path d="M1.5 3.3 l5 1.6 v5.4 l-5 -1.8z" fill="#8c8c8c" stroke="#222" stroke-width=".7"/><path d="M6.5 4.8999999999999995 l4 -2.6 v5.2 l-4 2.8z" fill="#5c5c5c" stroke="#222" stroke-width=".7"/></g><path d="M0.8999999999999995 13.4 h7.4 M4.6 9.7 v7.4" stroke="#5ad41e" stroke-width="2.2" fill="none"/><path d="M10.4 17.4 h8" stroke="#e8dc00" stroke-width="2.4" fill="none"/><path d="M7.4 18.6 l6 -8" stroke="#222" stroke-width="1"/></svg></div><div class="ico" style="left:707px;top:68.6px"><svg width="20" height="20" viewBox="0 0 20 20"><ellipse cx="14.5" cy="17.4" rx="7.0" ry="1.5" fill="#6a7088" opacity=".55"/><path d="M5 4.2 v10.6 a5.0 2.2 0 0 0 10 0 v-10.6 a5.0 2.2 0 0 0 -10 0z" fill="url(#gb)" stroke="#1a2c5c" stroke-width="1.0"/><ellipse cx="10.0" cy="4.2" rx="5.0" ry="2.2" fill="#4a72c0" stroke="#1a2c5c" stroke-width="1.0"/><path d="M10 6 v12" stroke="#fff" stroke-width="1.3" stroke-dasharray="2.2 1.6"/></svg></div><div class="ico" style="left:733px;top:68.6px"><svg width="20" height="20" viewBox="0 0 20 20"><ellipse cx="14.5" cy="17.4" rx="7.0" ry="1.5" fill="#6a7088" opacity=".55"/><path d="M5 4.2 v10.6 a5.0 2.2 0 0 0 10 0 v-10.6 a5.0 2.2 0 0 0 -10 0z" fill="#3c5aa8" stroke="#1a2c5c" stroke-width="1"/><ellipse cx="10.0" cy="4.2" rx="5.0" ry="2.2" fill="#4a72c0" stroke="#1a2c5c" stroke-width="1"/><path d="M7.4 5.6 v11.6 M10.4 6 v11.8 M13 5.6 v11.4" stroke="#f0e890" stroke-width="1.4"/></svg></div><div class="ico" style="left:759px;top:68.6px"><svg width="20" height="20" viewBox="0 0 20 20"><ellipse cx="13.5" cy="17.4" rx="7.0" ry="1.5" fill="#6a7088" opacity=".55"/><path d="M4 4.2 v10.6 a5.0 2.2 0 0 0 10 0 v-10.6 a5.0 2.2 0 0 0 -10 0z" fill="url(#gl)" stroke="#30dcec" stroke-width="1"/><ellipse cx="9.0" cy="4.2" rx="5.0" ry="2.2" fill="#e8f0fc" stroke="#30dcec" stroke-width="1"/><path d="M6.4 10.6 l3.4 4.4 l6 -10" fill="none" stroke="#20b020" stroke-width="2.6"/></svg></div><div class="ico" style="left:785px;top:68.6px"><svg width="20" height="20" viewBox="0 0 20 20"><ellipse cx="6" cy="14.8" rx="5.4" ry="1.7" fill="#303a58" opacity=".75"/><path d="M6 5.2 v10.6 a5.0 2.2 0 0 0 10 0 v-10.6 a5.0 2.2 0 0 0 -10 0z" fill="url(#gl)" stroke="#30dcec" stroke-width="1"/><ellipse cx="11.0" cy="5.2" rx="5.0" ry="2.2" fill="#e8f0fc" stroke="#30dcec" stroke-width="1"/><rect x="12.6" y=".8" width="5.6" height="5.6" fill="none" stroke="#d08820" stroke-width="1.2"/><rect x="14.6" y="2.6" width="2.4" height="2.4" fill="#e04820"/></svg></div><div class="ico" style="left:811px;top:68.6px"><svg width="20" height="20" viewBox="0 0 20 20"><path d="M5.4 4.068 v11.264 a4.7 2.068 0 0 0 9.4 0 v-11.264 a4.7 2.068 0 0 0 -9.4 0z" fill="#dceafc" stroke="#5a94e0" stroke-width="0.9"/><ellipse cx="10.100000000000001" cy="4.068" rx="4.7" ry="2.068" fill="#e8f2ff" stroke="#5a94e0" stroke-width="0.9"/><path d="M7.4 5 l1.6 11.6 M9.6 5.4 l2.8 11.4 M12.6 5 l-1.4 12 M13.6 6 l-3.6 5" stroke="#5a94e0" stroke-width=".7" fill="none"/></svg></div><div class="ico" style="left:837px;top:68.6px"><svg width="20" height="20" viewBox="0 0 20 20"><path d="M2.4 5.4 L10 2.4 l7.6 3 l-1 6.6 L10 17.8 L3.4 12z" fill="#1c3a90" stroke="#0a1640" stroke-width="1"/><path d="M2.4 5.4 L10 2.4 l7.6 3 L10 8.2z" fill="#5a8ae0" stroke="#0a1640" stroke-width=".8"/><path d="M10 8.2 V17.8 L16.6 12 l1 -6.6z" fill="#10204c"/></svg></div><div class="glabel" style="left:730px">图像 (进阶)</div><div class="ico" style="left:878px;top:68.6px"><svg width="20" height="20" viewBox="0 0 20 20"><path d="M5.5 11.5 l-5.4 5.4" stroke="#8a8a8a" stroke-width="3" stroke-linecap="round"/><path d="M5.5 11.5 l-5.4 5.4" stroke="#d8d8d8" stroke-width="1.2" stroke-linecap="round"/><circle cx="9" cy="8" r="5" fill="url(#glens)" stroke="#8894a8" stroke-width="1.5"/><g transform="translate(10.4 8.6) scale(0.8)"><path d="M0 3 l5 -3 l6 2 l-5 3z" fill="#c8c8c8" stroke="#333" stroke-width=".7"/><path d="M0 3 l6 2 v7 l-6 -2.4z" fill="#8a8a8a" stroke="#333" stroke-width=".7"/><path d="M6 5 l5 -3 v6.6 l-5 3.4z" fill="#5a5a5a" stroke="#333" stroke-width=".7"/></g><path d="M1 3 h4.4 M3.2 .8 v4.4 M1 7 h4.4" stroke="#111" stroke-width="1"/><path d="M7.6 5.4 l4 2.6 l-4 2.6z" fill="#9ab4d8" stroke="#6a84a8" stroke-width=".5"/></svg></div><div class="ico" style="left:904px;top:68.6px"><svg width="20" height="20" viewBox="0 0 20 20"><path d="M5.5 11.5 l-5.4 5.4" stroke="#8a8a8a" stroke-width="3" stroke-linecap="round"/><path d="M5.5 11.5 l-5.4 5.4" stroke="#d8d8d8" stroke-width="1.2" stroke-linecap="round"/><circle cx="9" cy="8" r="5" fill="url(#glens)" stroke="#8894a8" stroke-width="1.5"/><g transform="translate(10.4 8.6) scale(0.8)"><path d="M0 3 l5 -3 l6 2 l-5 3z" fill="#c8c8c8" stroke="#333" stroke-width=".7"/><path d="M0 3 l6 2 v7 l-6 -2.4z" fill="#8a8a8a" stroke="#333" stroke-width=".7"/><path d="M6 5 l5 -3 v6.6 l-5 3.4z" fill="#5a5a5a" stroke="#333" stroke-width=".7"/></g><path d="M0.6 0.6 l3.4 0 l-3.4 3.4z" fill="#28c028" stroke="#0a7a0a" stroke-width=".4"/><path d="M19 0.6 l-3.4 0 l--3.4 3.4z" fill="#28c028" stroke="#0a7a0a" stroke-width=".4"/><path d="M0.6 18.6 l3.4 0 l-3.4 -3.4z" fill="#28c028" stroke="#0a7a0a" stroke-width=".4"/><path d="M19 18.6 l-3.4 0 l--3.4 -3.4z" fill="#28c028" stroke="#0a7a0a" stroke-width=".4"/><path d="M7.6 5.4 l4 2.6 l-4 2.6z" fill="#9ab4d8" stroke="#6a84a8" stroke-width=".5"/></svg></div><div class="ico" style="left:930px;top:68.6px"><svg width="20" height="20" viewBox="0 0 20 20"><rect x="3.6" y="4.6" width="12.8" height="10.8" fill="#4a5068"/><rect x="4.2" y="4.6" width="12.2" height="10.2" fill="url(#gl)" stroke="#111" stroke-width="1.1"/><path d="M1.0 2.0 L4.8 2.0 L3.7 3.1 L5.6 5.0 L4.0 6.6 L2.1 4.7 L1.0 5.8z" fill="#30c828" stroke="#0a8a0a" stroke-width=".5"/><path d="M19.0 2.0 L15.2 2.0 L16.3 3.1 L14.4 5.0 L16.0 6.6 L17.9 4.7 L19.0 5.8z" fill="#30c828" stroke="#0a8a0a" stroke-width=".5"/><path d="M1.0 18.0 L4.8 18.0 L3.7 16.9 L5.6 15.0 L4.0 13.4 L2.1 15.3 L1.0 14.2z" fill="#30c828" stroke="#0a8a0a" stroke-width=".5"/><path d="M19.0 18.0 L15.2 18.0 L16.3 16.9 L14.4 15.0 L16.0 13.4 L17.9 15.3 L19.0 14.2z" fill="#30c828" stroke="#0a8a0a" stroke-width=".5"/><text x="10.3" y="12.8" font-size="7.500" font-weight="bold" text-anchor="middle" font-family="Liberation Sans,sans-serif" fill="#203070">1:1</text></svg></div><div class="ico" style="left:957px;top:68.6px"><svg width="20" height="20" viewBox="0 0 20 20"><path d="M4.6 15.4 L14.6 5.4" stroke="#0a7a0a" stroke-width="3.4"/><path d="M4.6 15.4 L14.6 5.4" stroke="#30c830" stroke-width="1.8"/><path d="M18 2 l-6.6 1.4 l5.2 5.2z" fill="#30c830" stroke="#0a7a0a" stroke-width=".8"/><circle cx="4.4" cy="15.6" r="2.6" fill="#d8d8d8" stroke="#555" stroke-width=".8"/></svg></div><div class="ico" style="left:983px;top:68.6px"><svg width="20" height="20" viewBox="0 0 20 20"><g transform="translate(10 10) scale(1.000) translate(-10 -10)"><path d="M1.6 8.7 A8.5 8.5 0 0 1 15.3 3.9 L17.8 1.4 V8.7 H10.5 L12.8 6.4 A5 5 0 0 0 5.3 8.7z" fill="#1e9e1e" stroke="#00000055" stroke-width=".5"/><path d="M1.6 8.7 A8.5 8.5 0 0 1 15.3 3.9 L17.8 1.4 V8.7 H10.5 L12.8 6.4 A5 5 0 0 0 5.3 8.7z" fill="#38c038" stroke="#00000055" stroke-width=".5" transform="rotate(180 10 10)"/></g></svg></div><div class="ico" style="left:1009px;top:68.6px"><svg width="20" height="20" viewBox="0 0 20 20"><g transform="translate(-0.30000000000000004 0) scale(1.0924999999999998 0.95)"><path d="M.6 8 Q10 -1.4 19.4 7.4 Q10 12.4 .6 8z" fill="#d4d8e6" stroke="#3a4058" stroke-width=".9"/><path d="M.8 7.6 Q9.6 -2.6 19 6.6" fill="none" stroke="#4a5070" stroke-width="1.9"/><path d="M3 3.4 l-.8 -1.400 M5.600 1.800 l-.5 -1.500 M8.600 .9 l-.1 -1.500 M11.800 .9 l.4 -1.500 M14.600 2 l.9 -1.300 M17 3.800 l1.100 -1" stroke="#4a5070" stroke-width=".7"/><circle cx="10" cy="6.2" r="3.4" fill="#4c6ca2"/><circle cx="10" cy="6.2" r="1.5" fill="#141c34"/><circle cx="8.9" cy="5.1" r=".8" fill="#dfe8ff"/></g><circle cx="10.4" cy="13.4" r="5.4" fill="#f8d030" stroke="#b88a10" stroke-width=".7"/><circle cx="8.6" cy="12" r=".8" fill="#222"/><circle cx="12.2" cy="12" r=".8" fill="#222"/><path d="M7.6 14.6 q2.8 2.6 5.6 0" fill="none" stroke="#6a4a08" stroke-width=".8"/></svg></div><div class="glabel" style="left:954px">视图</div><div class="ico" style="left:1052px;top:68.6px"><svg width="20" height="20" viewBox="0 0 20 20"><g transform="translate(0 0)"><path d="M2 12 l9 -6 l8 4 l-9 7z" fill="#e4eaf6" stroke="#8a96b4" stroke-width=".8"/><path d="M7.5 11.5 V3" stroke="#1c5cf0" stroke-width="2.2"/><path d="M7.5 -.2 l2.8 4.2 h-5.6z" fill="#1c5cf0"/><path d="M7.5 11.5 L15 7" stroke="#18b030" stroke-width="2.2"/><path d="M17.4 5.5 l-4.6 .3 l2.400 3.700z" fill="#18b030"/><path d="M7.5 11.5 L14.5 16" stroke="#e02020" stroke-width="2.2"/><path d="M17 17.600 l-4.600 -.5 l2.600 -3.600z" fill="#e02020"/><circle cx="7.5" cy="11.5" r="1.6" fill="#e8e8e8" stroke="#555" stroke-width=".6"/></g></svg></div><div class="ico" style="left:1078px;top:68.6px"><svg width="20" height="20" viewBox="0 0 20 20"><g transform="translate(1 0)"><path d="M2 12 l9 -6 l8 4 l-9 7z" fill="#e4eaf6" stroke="#8a96b4" stroke-width=".8"/><path d="M7.5 11.5 V3" stroke="#1c5cf0" stroke-width="2.2"/><path d="M7.5 -.2 l2.8 4.2 h-5.6z" fill="#1c5cf0"/><path d="M7.5 11.5 L15 7" stroke="#18b030" stroke-width="2.2"/><path d="M17.4 5.5 l-4.6 .3 l2.400 3.700z" fill="#18b030"/><path d="M7.5 11.5 L14.5 16" stroke="#e02020" stroke-width="2.2"/><path d="M17 17.600 l-4.600 -.5 l2.600 -3.600z" fill="#e02020"/><circle cx="7.5" cy="11.5" r="1.6" fill="#e8e8e8" stroke="#555" stroke-width=".6"/></g><path d="M2 17 l4 -8 l1.6 2.4 l3 -1.6 l-1 4.6z" fill="#30c030" stroke="#0a6a0a" stroke-width=".7"/><rect x="8" y="12.6" width="10" height="5.6" fill="#e4e4e4" stroke="#888" stroke-width=".8"/></svg></div><div class="ico" style="left:1104px;top:68.6px"><svg width="20" height="20" viewBox="0 0 20 20"><g transform="translate(2 0)"><path d="M2 12 l9 -6 l8 4 l-9 7z" fill="#e4eaf6" stroke="#8a96b4" stroke-width=".8"/><path d="M7.5 11.5 V3" stroke="#1c5cf0" stroke-width="2.2"/><path d="M7.5 -.2 l2.8 4.2 h-5.6z" fill="#1c5cf0"/><path d="M7.5 11.5 L15 7" stroke="#18b030" stroke-width="2.2"/><path d="M17.4 5.5 l-4.6 .3 l2.400 3.700z" fill="#18b030"/><path d="M7.5 11.5 L14.5 16" stroke="#e02020" stroke-width="2.2"/><path d="M17 17.600 l-4.600 -.5 l2.600 -3.600z" fill="#e02020"/><circle cx="7.5" cy="11.5" r="1.6" fill="#e8e8e8" stroke="#555" stroke-width=".6"/></g><path d="M2 9 l5 1 l-1.4 1.4 l5 5 l-2.2 2.2 l-5 -5 l-1.4 1.4z" fill="#30c030" stroke="#0a6a0a" stroke-width=".7"/></svg></div><div class="glabel" style="left:1089px">工作平面</div><div class="ico" style="left:1147px;top:68.6px"><svg width="20" height="20" viewBox="0 0 20 20"><rect x="1" y="1" width="6" height="6" fill="#00c8f0" stroke="#444" stroke-width=".4"/><rect x="7" y="1" width="6" height="6" fill="#f0e000" stroke="#444" stroke-width=".4"/><rect x="13" y="1" width="6" height="6" fill="#10d810" stroke="#444" stroke-width=".4"/><rect x="1" y="7" width="6" height="6" fill="#f07800" stroke="#444" stroke-width=".4"/><rect x="7" y="7" width="6" height="6" fill="#a06000" stroke="#444" stroke-width=".4"/><rect x="13" y="7" width="6" height="6" fill="#f000f0" stroke="#444" stroke-width=".4"/><rect x="1" y="13" width="6" height="6" fill="#0010e0" stroke="#444" stroke-width=".4"/><rect x="7" y="13" width="6" height="6" fill="#10a810" stroke="#444" stroke-width=".4"/><rect x="13" y="13" width="6" height="6" fill="#909090" stroke="#444" stroke-width=".4"/></svg></div><div class="ico" style="left:1173px;top:68.6px"><svg width="20" height="20" viewBox="0 0 20 20"><rect x="3" y="1" width="14" height="18" fill="#f4f6fc" stroke="#6478b0" stroke-width="1.2"/><path d="M5 4 h10 M5 6 h6" stroke="#e8a838" stroke-width="1"/><rect x="5.0" y="9.0" width="2.6" height="2.6" fill="#e02020"/><rect x="7.6" y="9.0" width="2.6" height="2.6" fill="#f0e000"/><rect x="10.2" y="9.0" width="2.6" height="2.6" fill="#10c010"/><rect x="12.8" y="9.0" width="2.6" height="2.6" fill="#00c0f0"/><rect x="5.0" y="11.6" width="2.6" height="2.6" fill="#f000f0"/><rect x="7.6" y="11.6" width="2.6" height="2.6" fill="#1020e0"/><rect x="10.2" y="11.6" width="2.6" height="2.6" fill="#f08000"/><rect x="12.8" y="11.6" width="2.6" height="2.6" fill="#909090"/><rect x="5.0" y="14.2" width="2.6" height="2.6" fill="#10a0a0"/><rect x="7.6" y="14.2" width="2.6" height="2.6" fill="#e02080"/><rect x="10.2" y="14.2" width="2.6" height="2.6" fill="#80c020"/><rect x="12.8" y="14.2" width="2.6" height="2.6" fill="#4040c0"/></svg></div><div class="ico" style="left:1199px;top:68.6px"><svg width="20" height="20" viewBox="0 0 20 20"><circle cx="10" cy="10" r="9" fill="#6a9a38" stroke="#3a5a18" stroke-width=".8"/><circle cx="10" cy="10" r="7" fill="#8ab858"/><path d="M4.5 15.5 L14 6" stroke="#7a8496" stroke-width="3.2" stroke-linecap="round"/><path d="M4.5 15.5 L14 6" stroke="#eef0f4" stroke-width="1.8" stroke-linecap="round"/><circle cx="14.4" cy="5.6" r="2.7" fill="#eef0f4" stroke="#7a8496" stroke-width=".8"/><rect x="14" y="2.2" width="2.4" height="3.2" fill="#7a8aa8" transform="rotate(45 14.4 5.6)"/><path d="M15.5 15.5 L5.4 5.4" stroke="#3a6ac0" stroke-width="2.6" stroke-linecap="round"/><path d="M5.4 5.4 l-1.6 -2.4" stroke="#dfe4ec" stroke-width="1.8"/></svg></div><div class="ico" style="left:1225px;top:68.6px"><svg width="20" height="20" viewBox="0 0 20 20"><rect x="1.6" y="1.6" width="17" height="16.4" fill="#e8eef8" stroke="#24386c" stroke-width="1.2"/><rect x="1.6" y="1.6" width="17" height="3.4" fill="#3a5aa8"/><path d="M3.4 7 h2 v2 h-2z M6.6 7 h2 v2 h-2z M9.8 7 h2 v2 h-2z M13 7 h2 v2 h-2z" fill="#a07828"/><path d="M5.5 17.9 L15 8.4" stroke="#7a8496" stroke-width="3.2" stroke-linecap="round"/><path d="M5.5 17.9 L15 8.4" stroke="#c8d0dc" stroke-width="1.8" stroke-linecap="round"/><circle cx="15.4" cy="8.0" r="2.7" fill="#c8d0dc" stroke="#7a8496" stroke-width=".8"/><rect x="15" y="4.6000000000000005" width="2.4" height="3.2" fill="#7a8aa8" transform="rotate(45 15.4 8.0)"/><path d="M16.5 17.9 L6.4 7.800000000000001" stroke="#3a6ac0" stroke-width="2.6" stroke-linecap="round"/><path d="M6.4 7.800000000000001 l-1.6 -2.4" stroke="#dfe4ec" stroke-width="1.8"/></svg></div><div class="ico" style="left:1251px;top:68.6px"><svg width="20" height="20" viewBox="0 0 20 20"><rect x="2" y="3" width="15" height="14" fill="none" stroke="#223" stroke-width="1.3" stroke-dasharray="1.6 1.6"/><path d="M8 9 q3 -5 9 -5.6 l2 3 q-5 1 -6 5 q-3 1 -5 -2.4z" fill="#e8b070" stroke="#8a5a20" stroke-width=".8"/><path d="M2.8000000000000003 14.4 h5.2 M5.4 11.8 v5.2" stroke="#2858e0" stroke-width="1.4" fill="none"/><circle cx="5.4" cy="14.4" r="3.2" fill="none" stroke="#e8d000" stroke-width="1"/></svg></div><div class="ico" style="left:1277px;top:68.6px"><svg width="20" height="20" viewBox="0 0 20 20"><path d="M1.6 16.6 L5.6 3.4 L18.6 2 L15.4 15.4z" fill="#f09a9a" stroke="#2c54b8" stroke-width="1.6"/><path d="M3 12.2 l13.4 -1.4 M4.2 8 l13.2 -1.4 M8.6 3.2 l-3.4 13 M12.6 2.8 l-3.2 13.2 M15.8 2.4 l-3.2 13.2" stroke="#d83030" stroke-width=".7"/></svg></div><div class="glabel" style="left:1223px">系统</div>
<div id="blueL" class="abs"></div><div id="blueB" class="abs"></div>
<div id="leftpanel" class="abs"><div class="griph" style="top:3px"></div><div class="griph" style="top:256px"></div></div><div class="ico" style="left:7.199999999999999px;top:133px"><svg width="20" height="20" viewBox="0 0 20 20"><path d="M14.32 12.32 l-0 0" stroke="#8a8a8a" stroke-width="3" stroke-linecap="round"/><path d="M14.32 12.32 l-0 0" stroke="#d8d8d8" stroke-width="1.2" stroke-linecap="round"/><circle cx="10.4" cy="8.4" r="5.6" fill="url(#glens)" stroke="#8894a8" stroke-width="1.5"/><path d="M5.6 12.6 L1.6 16.8" stroke="#8a8a8a" stroke-width="3" stroke-linecap="round"/><path d="M5.6 12.6 L1.6 16.8" stroke="#d8d8d8" stroke-width="1.1" stroke-linecap="round"/><path d="M3 5 l4 1 M2.4 8 l3.4 .4 M3 11 l3 -.6" stroke="#a8b0c0" stroke-width="1"/></svg></div><div class="ico" style="left:33.2px;top:133px"><svg width="20" height="20" viewBox="0 0 20 20"><path d="M3 3 L14 16 M3.6 9.6 l7 -7" stroke="#2858d8" stroke-width="1.4"/><g transform="translate(1 0)"><path d="M4 16.5 l1.2 -4 l9.6 -10 l2.8 2.8 l-9.6 10z" fill="#e8a030" stroke="#6a3a10" stroke-width=".8"/><path d="M4 16.5 l1.2 -4 l2.8 2.8z" fill="#f4dcb4" stroke="#6a3a10" stroke-width=".6"/><path d="M4 16.5 l.5 -1.6 l1.1 1.1z" fill="#222"/><path d="M13.4 4 l2.8 2.8 l1.4 -1.5 l-2.8 -2.8z" fill="#d82020"/></g></svg><svg class="abs" style="left:14px;top:-.5px" width="6" height="4" viewBox="0 0 6 4"><path d="M0 0 h6 l-3 3.6z" fill="#000"/></svg></div><div class="ico" style="left:7.199999999999999px;top:159px"><svg width="20" height="20" viewBox="0 0 20 20"><rect x="4.6" y="5.6" width="10.8" height="8.8" fill="#4a5068"/><rect x="5.2" y="5.6" width="10.2" height="8.2" fill="url(#gl)" stroke="#222" stroke-width="1"/><path d="M2.0 3.0 L5.8 3.0 L4.7 4.1 L6.6 6.0 L5.0 7.6 L3.1 5.7 L2.0 6.8z" fill="#30c828" stroke="#0a8a0a" stroke-width=".5"/><path d="M18.0 3.0 L14.2 3.0 L15.3 4.1 L13.4 6.0 L15.0 7.6 L16.9 5.7 L18.0 6.8z" fill="#30c828" stroke="#0a8a0a" stroke-width=".5"/><path d="M2.0 17.0 L5.8 17.0 L4.7 15.9 L6.6 14.0 L5.0 12.4 L3.1 14.3 L2.0 13.2z" fill="#30c828" stroke="#0a8a0a" stroke-width=".5"/><path d="M18.0 17.0 L14.2 17.0 L15.3 15.9 L13.4 14.0 L15.0 12.4 L16.9 14.3 L18.0 13.2z" fill="#30c828" stroke="#0a8a0a" stroke-width=".5"/></svg></div><div class="ico" style="left:33.2px;top:159px"><svg width="20" height="20" viewBox="0 0 20 20"><path d="M3 6 q4 -5 8 0 q3 5 -3 8 q-5 2 0 4 q5 2 8 -3" fill="none" stroke="#2858d8" stroke-width="1.5"/><g transform="translate(1 0)"><path d="M4 16.5 l1.2 -4 l9.6 -10 l2.8 2.8 l-9.6 10z" fill="#e8a030" stroke="#6a3a10" stroke-width=".8"/><path d="M4 16.5 l1.2 -4 l2.8 2.8z" fill="#f4dcb4" stroke="#6a3a10" stroke-width=".6"/><path d="M4 16.5 l.5 -1.6 l1.1 1.1z" fill="#222"/><path d="M13.4 4 l2.8 2.8 l1.4 -1.5 l-2.8 -2.8z" fill="#d82020"/></g></svg><svg class="abs" style="left:14px;top:-.5px" width="6" height="4" viewBox="0 0 6 4"><path d="M0 0 h6 l-3 3.6z" fill="#000"/></svg></div><div class="ico" style="left:7.199999999999999px;top:185px"><svg width="20" height="20" viewBox="0 0 20 20"><path d="M5.5 11.5 l-5.4 5.4" stroke="#8a8a8a" stroke-width="3" stroke-linecap="round"/><path d="M5.5 11.5 l-5.4 5.4" stroke="#d8d8d8" stroke-width="1.2" stroke-linecap="round"/><circle cx="9" cy="8" r="5" fill="url(#glens)" stroke="#8894a8" stroke-width="1.5"/><g transform="translate(10.4 8.6) scale(0.8)"><path d="M0 3 l5 -3 l6 2 l-5 3z" fill="#c8c8c8" stroke="#333" stroke-width=".7"/><path d="M0 3 l6 2 v7 l-6 -2.4z" fill="#8a8a8a" stroke="#333" stroke-width=".7"/><path d="M6 5 l5 -3 v6.6 l-5 3.4z" fill="#5a5a5a" stroke="#333" stroke-width=".7"/></g><path d="M1 3 h4.4 M3.2 .8 v4.4 M1 7 h4.4" stroke="#111" stroke-width="1"/><path d="M7.6 5.4 l4 2.6 l-4 2.6z" fill="#9ab4d8" stroke="#6a84a8" stroke-width=".5"/></svg><svg class="abs" style="left:14px;top:-.5px" width="6" height="4" viewBox="0 0 6 4"><path d="M0 0 h6 l-3 3.6z" fill="#000"/></svg></div><div class="ico" style="left:33.2px;top:185px"><svg width="20" height="20" viewBox="0 0 20 20"><path d="M2 3 h15 v10 h-3 v4 h-12z" fill="#fffce0" stroke="#e8d800" stroke-width="1.6"/><path d="M5 9.6 l3.4 4 l6.6 -9" fill="none" stroke="#28b828" stroke-width="2.6"/></svg><svg class="abs" style="left:14px;top:-.5px" width="6" height="4" viewBox="0 0 6 4"><path d="M0 0 h6 l-3 3.6z" fill="#000"/></svg></div><div class="ico" style="left:7.199999999999999px;top:211px"><svg width="20" height="20" viewBox="0 0 20 20"><g transform="translate(0 0)"><path d="M2 12 l9 -6 l8 4 l-9 7z" fill="#e4eaf6" stroke="#8a96b4" stroke-width=".8"/><path d="M7.5 11.5 V3" stroke="#1c5cf0" stroke-width="2.2"/><path d="M7.5 -.2 l2.8 4.2 h-5.6z" fill="#1c5cf0"/><path d="M7.5 11.5 L15 7" stroke="#18b030" stroke-width="2.2"/><path d="M17.4 5.5 l-4.6 .3 l2.400 3.700z" fill="#18b030"/><path d="M7.5 11.5 L14.5 16" stroke="#e02020" stroke-width="2.2"/><path d="M17 17.600 l-4.600 -.5 l2.600 -3.600z" fill="#e02020"/><circle cx="7.5" cy="11.5" r="1.6" fill="#e8e8e8" stroke="#555" stroke-width=".6"/></g></svg><svg class="abs" style="left:14px;top:-.5px" width="6" height="4" viewBox="0 0 6 4"><path d="M0 0 h6 l-3 3.6z" fill="#000"/></svg></div><div class="ico" style="left:33.2px;top:211px"><svg width="20" height="20" viewBox="0 0 20 20"><path d="M2 16 q3 -16 7 -6 q3 8 8 4" fill="none" stroke="#2858d8" stroke-width="1.5"/><g transform="translate(1 0)"><path d="M4 16.5 l1.2 -4 l9.6 -10 l2.8 2.8 l-9.6 10z" fill="#e8a030" stroke="#6a3a10" stroke-width=".8"/><path d="M4 16.5 l1.2 -4 l2.8 2.8z" fill="#f4dcb4" stroke="#6a3a10" stroke-width=".6"/><path d="M4 16.5 l.5 -1.6 l1.1 1.1z" fill="#222"/><path d="M13.4 4 l2.8 2.8 l1.4 -1.5 l-2.8 -2.8z" fill="#d82020"/></g></svg><svg class="abs" style="left:14px;top:-.5px" width="6" height="4" viewBox="0 0 6 4"><path d="M0 0 h6 l-3 3.6z" fill="#000"/></svg></div><div class="ico" style="left:7.199999999999999px;top:237px"><svg width="20" height="20" viewBox="0 0 20 20"><g transform="translate(0 0)"><ellipse cx="9" cy="14" rx="7.6" ry="4.6" fill="#b88a6a" stroke="#6a4630" stroke-width=".8"/><circle cx="6" cy="15" r="1.7" fill="#1838e0"/><circle cx="10.4" cy="15.6" r="1.7" fill="#10b020"/><circle cx="12.6" cy="12.6" r="1.6" fill="#e02020"/><path d="M1.5 2.5 h9 l2 2 h-9z" fill="#9ab0f0" stroke="#5468b0" stroke-width=".5"/><path d="M1.5 5.5 h9 l2 2 h-9z" fill="#e8e8f0" stroke="#777" stroke-width=".5"/><path d="M2 8.5 h9 l2 2 h-9z" fill="#c8c8c8" stroke="#666" stroke-width=".5"/><path d="M9.5 12 L17.6 1.4" stroke="#a05a20" stroke-width="1.6"/><path d="M8.6 13.4 l2.2 -2.6 l-1.2 -.9z" fill="#e8e8e8" stroke="#555" stroke-width=".4"/></g></svg><svg class="abs" style="left:14px;top:-.5px" width="6" height="4" viewBox="0 0 6 4"><path d="M0 0 h6 l-3 3.6z" fill="#000"/></svg></div><div class="ico" style="left:33.2px;top:237px"><svg width="20" height="20" viewBox="0 0 20 20"><path d="M2 17 L6 5 L18.4 2.4 L14.6 15z" fill="#6aa2f0" stroke="#1c48b0" stroke-width="1.3"/><path d="M4 11 l12.4 -2.6 M11.8 3.8 l-3.6 12.4" stroke="#dfeaff" stroke-width="1"/></svg><svg class="abs" style="left:14px;top:-.5px" width="6" height="4" viewBox="0 0 6 4"><path d="M0 0 h6 l-3 3.6z" fill="#000"/></svg></div><div class="ico" style="left:7.199999999999999px;top:263px"><svg width="20" height="20" viewBox="0 0 20 20"><g transform="translate(10 10) scale(1.053) translate(-10 -10)"><path d="M1.6 8.7 A8.5 8.5 0 0 1 15.3 3.9 L17.8 1.4 V8.7 H10.5 L12.8 6.4 A5 5 0 0 0 5.3 8.7z" fill="#4a86d8" stroke="#00000055" stroke-width=".5"/><path d="M1.6 8.7 A8.5 8.5 0 0 1 15.3 3.9 L17.8 1.4 V8.7 H10.5 L12.8 6.4 A5 5 0 0 0 5.3 8.7z" fill="#6aa2ec" stroke="#00000055" stroke-width=".5" transform="rotate(180 10 10)"/></g></svg><svg class="abs" style="left:14px;top:-.5px" width="6" height="4" viewBox="0 0 6 4"><path d="M0 0 h6 l-3 3.6z" fill="#000"/></svg></div><div class="ico" style="left:33.2px;top:263px"><svg width="20" height="20" viewBox="0 0 20 20"><g transform="translate(2 2.4) scale(1.42)"><path d="M0 3 l5 -3 l6 2 l-5 3z" fill="#c8c8c8" stroke="#333" stroke-width=".7"/><path d="M0 3 l6 2 v7 l-6 -2.4z" fill="#8a8a8a" stroke="#333" stroke-width=".7"/><path d="M6 5 l5 -3 v6.6 l-5 3.4z" fill="#5a5a5a" stroke="#333" stroke-width=".7"/></g></svg><svg class="abs" style="left:14px;top:-.5px" width="6" height="4" viewBox="0 0 6 4"><path d="M0 0 h6 l-3 3.6z" fill="#000"/></svg></div><div class="ico" style="left:7.199999999999999px;top:289px"><svg width="20" height="20" viewBox="0 0 20 20"><ellipse cx="10" cy="18" rx="5.4" ry="1.4" fill="#8a90a8" opacity=".6"/><text x="10" y="15.6" font-size="19" font-weight="bold" text-anchor="middle" font-family="Liberation Sans,sans-serif" fill="#4a78d0" stroke="#24408c" stroke-width=".5">?</text></svg><svg class="abs" style="left:14px;top:-.5px" width="6" height="4" viewBox="0 0 6 4"><path d="M0 0 h6 l-3 3.6z" fill="#000"/></svg></div><div class="ico" style="left:33.2px;top:289px"><svg width="20" height="20" viewBox="0 0 20 20"><path d="M3 3 v15 M17 3 v15" stroke="#222" stroke-width="1.4"/><path d="M4 6.4 h12" stroke="#e8d800" stroke-width="1.8"/><path d="M3.6 6.4 l3.4 -2.2 v4.4z M16.4 6.4 l-3.4 -2.2 v4.4z" fill="#e8d800" stroke="#8a7a00" stroke-width=".4"/></svg><svg class="abs" style="left:14px;top:-.5px" width="6" height="4" viewBox="0 0 6 4"><path d="M0 0 h6 l-3 3.6z" fill="#000"/></svg></div><div class="ico" style="left:7.199999999999999px;top:315px"><svg width="20" height="20" viewBox="0 0 20 20"><path d="M4 5 h12 l-1.4 13 h-9.2z" fill="#a8d0e8" stroke="#3a6a8a" stroke-width="1"/><ellipse cx="10" cy="5" rx="6.4" ry="1.8" fill="#d8ecf8" stroke="#3a6a8a" stroke-width="1"/><path d="M7 9 l2 6 M10.4 8.6 l-1 7 M13 9 l-2 5" stroke="#e8f4a0" stroke-width="1.1"/><path d="M8 4.2 l2 -2.6 l2 2.6z" fill="#e8d800" stroke="#665a00" stroke-width=".5"/></svg><svg class="abs" style="left:14px;top:-.5px" width="6" height="4" viewBox="0 0 6 4"><path d="M0 0 h6 l-3 3.6z" fill="#000"/></svg></div><div class="ico" style="left:33.2px;top:315px"><svg width="20" height="20" viewBox="0 0 20 20"><ellipse cx="10.4" cy="17.6" rx="5.6" ry="1.3" fill="#8a90a8" opacity=".55"/><g><path d="M2 8.5 l6.5 -6.5 v3.8 q9 .4 8.4 10.6 q-1.6 -5.4 -8.4 -5 v3.8z" fill="#b4b4b4" stroke="#7a7a7a" stroke-width=".8"/></g></svg><svg class="abs" style="left:14px;top:-.5px" width="6" height="4" viewBox="0 0 6 4"><path d="M0 0 h6 l-3 3.6z" fill="#000"/></svg></div><div class="ico" style="left:7.199999999999999px;top:341px"><svg width="20" height="20" viewBox="0 0 20 20"><path d="M2 1 v14" stroke="#222" stroke-width="1.6"/><path d="M1 15 l2.4 -.2 M4 2 v11" stroke="#e87818" stroke-width="1.4"/><circle cx="11" cy="9" r="5.4" fill="none" stroke="#6a3a1a" stroke-width="1.6"/><path d="M11 1.6 v14.8 M3.6 9 h14.8 M5.8 3.8 l10.4 10.4 M16.2 3.8 L5.8 14.2" stroke="#6a3a1a" stroke-width="1.1"/><circle cx="11" cy="9" r="1.8" fill="#e87818"/><path d="M2 19 l6 -3 l10 .6 l-6 2.8z M4 17 l10 1" fill="#f0902a" stroke="#c85a08" stroke-width=".8"/></svg><svg class="abs" style="left:14px;top:-.5px" width="6" height="4" viewBox="0 0 6 4"><path d="M0 0 h6 l-3 3.6z" fill="#000"/></svg></div><div class="ico" style="left:33.2px;top:341px"><svg width="20" height="20" viewBox="0 0 20 20"><rect x="7" y="8" width="12" height="11" fill="#fff" stroke="#111" stroke-width="1.2"/><path d="M1 14 v-11 h6.0 l1.5 1.6 h6.0 v9.4z" fill="#f0c860" stroke="#b88820" stroke-width=".7"/><path d="M1 14 l2.4 -6.82 h15 l-2.4 6.82z" fill="url(#gfold)" stroke="#b88820" stroke-width=".7"/><path d="M9 4 q3 -3 6 -.6 l1.2 -1.2 v4 h-4 l1.2 -1.2 q-1.6 -1.4 -3.4 0z" fill="#28b028"/></svg></div>
<div id="viewport" class="abs"></div>
<svg class="abs" style="left:0;top:0" width="1920" height="1048" viewBox="0 0 1920 1048" shape-rendering="crispEdges"><defs><linearGradient id="pole" x1="0" x2="1" y1="0" y2="0"><stop offset="0" stop-color="#9a9a9a"/><stop offset=".35" stop-color="#d6d6d6"/><stop offset=".6" stop-color="#c4c4c4"/><stop offset="1" stop-color="#7e7e7e"/></linearGradient><linearGradient id="cg" x1="0" x2="1"><stop offset="0" stop-color="#a8a8a8"/><stop offset=".3" stop-color="#cfcfcf"/><stop offset=".7" stop-color="#8c8c8c"/><stop offset="1" stop-color="#4c4c4c"/></linearGradient><linearGradient id="cgl" x1="0" x2="1"><stop offset="0" stop-color="#b0b0b0"/><stop offset=".35" stop-color="#fafafa"/><stop offset=".75" stop-color="#a0a0a0"/><stop offset="1" stop-color="#6c6c6c"/></linearGradient><linearGradient id="garrow" x1="0" x2="0" y1="0" y2="1"><stop offset="0" stop-color="#3cff3c"/><stop offset=".5" stop-color="#00e000"/><stop offset="1" stop-color="#007a00"/></linearGradient></defs><g transform="translate(0 445.0) scale(1 .9934) translate(0 -444)"><rect x="444.0" y="503.5" width="244.0" height="11.5" fill="#a2a2a2" stroke="#000" stroke-width="1.4"/><rect x="448.0" y="506.5" width="236.0" height="5.0" fill="#000"/><rect x="452.0" y="507.7" width="228.0" height="1.6" fill="#a2a2a2"/><rect x="452.0" y="510.1" width="228.0" height="1.0" fill="#a2a2a2"/><rect x="444.0" y="515.0" width="244.0" height="12.5" fill="#a2a2a2" stroke="#000" stroke-width="1.4"/><rect x="681.0" y="504.2" width="8.0" height="10.2" fill="#a2a2a2"/><rect x="684.2" y="503.5" width="1.6" height="24.0" fill="#000"/><rect x="678.4" y="520.0" width="1.6" height="1.6" fill="#000"/><circle cx="679.0" cy="509.2" r="2.5" fill="#000"/><rect x="686.4" y="520.0" width="1.6" height="1.6" fill="#000"/><circle cx="691.0" cy="509.2" r="2.5" fill="#000"/></g><g transform="translate(0 444.0) scale(1 .9934) translate(0 -444)"><rect x="684.0" y="503.5" width="244.0" height="11.5" fill="#a2a2a2" stroke="#000" stroke-width="1.4"/><rect x="688.0" y="506.5" width="236.0" height="5.0" fill="#000"/><rect x="692.0" y="507.7" width="228.0" height="1.6" fill="#a2a2a2"/><rect x="692.0" y="510.1" width="228.0" height="1.0" fill="#a2a2a2"/><rect x="684.0" y="515.0" width="244.0" height="12.5" fill="#a2a2a2" stroke="#000" stroke-width="1.4"/><rect x="681.0" y="504.2" width="8.0" height="10.2" fill="#a2a2a2"/><rect x="684.2" y="503.5" width="1.6" height="24.0" fill="#000"/><rect x="678.4" y="520.0" width="1.6" height="1.6" fill="#000"/><circle cx="679.0" cy="509.2" r="2.5" fill="#000"/><rect x="686.4" y="520.0" width="1.6" height="1.6" fill="#000"/><circle cx="691.0" cy="509.2" r="2.5" fill="#000"/><rect x="921.0" y="504.2" width="8.0" height="10.2" fill="#a2a2a2"/><rect x="924.2" y="503.5" width="1.6" height="24.0" fill="#000"/><rect x="918.4" y="520.0" width="1.6" height="1.6" fill="#000"/><circle cx="919.0" cy="509.2" r="2.5" fill="#000"/><rect x="926.4" y="520.0" width="1.6" height="1.6" fill="#000"/><circle cx="931.0" cy="509.2" r="2.5" fill="#000"/></g><g transform="translate(0 442.6) scale(1 .9934) translate(0 -444)"><rect x="924.0" y="503.5" width="240.0" height="11.5" fill="#a2a2a2" stroke="#000" stroke-width="1.4"/><rect x="928.0" y="506.5" width="232.0" height="5.0" fill="#000"/><rect x="932.0" y="507.7" width="224.0" height="1.6" fill="#a2a2a2"/><rect x="932.0" y="510.1" width="224.0" height="1.0" fill="#a2a2a2"/><rect x="924.0" y="515.0" width="238.0" height="12.5" fill="#a2a2a2" stroke="#000" stroke-width="1.4"/><rect x="921.0" y="504.2" width="8.0" height="10.2" fill="#a2a2a2"/><rect x="924.2" y="503.5" width="1.6" height="24.0" fill="#000"/><rect x="918.4" y="520.0" width="1.6" height="1.6" fill="#000"/><circle cx="919.0" cy="509.2" r="2.5" fill="#000"/><rect x="926.4" y="520.0" width="1.6" height="1.6" fill="#000"/><circle cx="931.0" cy="509.2" r="2.5" fill="#000"/><rect x="1151.0" y="504.2" width="8.0" height="10.2" fill="#a2a2a2"/><rect x="1154.2" y="503.5" width="1.6" height="24.0" fill="#000"/><rect x="1148.4" y="520.0" width="1.6" height="1.6" fill="#000"/><circle cx="1149.0" cy="509.2" r="2.5" fill="#000"/><rect x="1156.4" y="520.0" width="1.6" height="1.6" fill="#000"/><circle cx="1161.0" cy="509.2" r="2.5" fill="#000"/></g><rect x="206.5" y="505.5" width="251.5" height="11.5" fill="#a2a2a2" stroke="#000" stroke-width="1.4"/><rect x="210.5" y="508.5" width="243.5" height="5.0" fill="#000"/><rect x="214.5" y="509.7" width="235.5" height="1.6" fill="#a2a2a2"/><rect x="214.5" y="512.1" width="235.5" height="1.0" fill="#a2a2a2"/><rect x="204.5" y="517.0" width="251.5" height="12.5" fill="#a2a2a2" stroke="#000" stroke-width="1.4"/><rect x="442.0" y="506.2" width="8.0" height="10.2" fill="#a2a2a2"/><rect x="445.2" y="505.5" width="1.6" height="24.0" fill="#000"/><rect x="439.4" y="522.0" width="1.6" height="1.6" fill="#000"/><circle cx="440.0" cy="511.2" r="2.5" fill="#000"/><rect x="447.4" y="522.0" width="1.6" height="1.6" fill="#000"/><circle cx="452.0" cy="511.2" r="2.5" fill="#000"/><path d="M328 511.6 h5 l3.5 3 l3.5 -3 h5 v-1.4 h-17z" fill="#a2a2a2" stroke="#000" stroke-width=".7"/><polygon points="203.0,557.0 208.0,538.0 214.0,538.0 214.0,557.0" fill="#8e8e8e" stroke="#000" stroke-width="1"/><polygon points="429.0,538.0 447.0,538.0 442.5,557.0 429.0,557.0" fill="#8e8e8e" stroke="#000" stroke-width="1"/><polygon points="213.6,528.0 256.0,528.0 256.0,535.0 429.0,535.0 431.5,537.0 431.5,540.0 429.0,540.0 429.0,557.0 213.6,557.0" fill="#a2a2a2" stroke="#000" stroke-width="1.5"/><line x1="256.0" y1="533.3" x2="428.0" y2="533.3" stroke="#000" stroke-width="1"/><rect x="203.0" y="558.3" width="240.5" height="5.0" fill="#a2a2a2" stroke="#000" stroke-width="1.3"/><rect x="321.5" y="525.2" width="8.5" height="2.6" fill="#000"/><rect x="333.5" y="525.2" width="8.5" height="2.6" fill="#000"/><rect x="322.0" y="529.4" width="21.0" height="1.6" fill="#a2a2a2" stroke="#000" stroke-width="0.8"/><rect x="378.0" y="530.6" width="12.0" height="1.6" fill="#a2a2a2" stroke="#000" stroke-width="0.7"/><path d="M406 533.2 h26 v-2.4 h-9 q-4 -3.4 -8 0 h-9z" fill="#a2a2a2" stroke="#000" stroke-width=".8"/><rect x="232.0" y="563.6" width="183.0" height="13.6" fill="#000"/><rect x="232.0" y="564.2" width="183.0" height="3.9" fill="#a2a2a2"/><rect x="325.0" y="569.8" width="90.0" height="1.0" fill="#a2a2a2"/><rect x="232.0" y="572.2" width="183.0" height="4.2" fill="#a2a2a2"/><rect x="234.0" y="711.5" width="181.0" height="34.5" fill="#000"/><rect x="237.0" y="714.3" width="178.0" height="3.8" fill="#a2a2a2"/><rect x="267.0" y="714.3" width="150.0" height="1.0" fill="#a2a2a2"/><rect x="289.0" y="720.2" width="100.0" height="0.9" fill="#a2a2a2"/><rect x="237.0" y="722.6" width="178.0" height="3.9" fill="#a2a2a2"/><rect x="297.0" y="722.6" width="120.0" height="1.4" fill="#000"/><rect x="233.0" y="732.8" width="182.0" height="4.6" fill="#a2a2a2"/><rect x="337.0" y="735.8" width="80.0" height="1.8" fill="#000"/><rect x="233.0" y="738.9" width="104.0" height="0.9" fill="#a2a2a2"/><rect x="233.0" y="741.2" width="182.0" height="3.9" fill="#a2a2a2"/><rect x="367.0" y="743.8" width="50.0" height="1.6" fill="#000"/><rect x="217.4" y="563.5" width="19.4" height="183.0" fill="#a2a2a2" stroke="#000" stroke-width="1.4"/><rect x="222.0" y="563.5" width="5.0" height="183.0" fill="#000"/><rect x="223.4" y="566.0" width="1.0" height="36.0" fill="#a2a2a2"/><rect x="225.4" y="624.0" width="1.0" height="17.0" fill="#a2a2a2"/><rect x="230.0" y="563.5" width="2.0" height="183.0" fill="#000"/><rect x="235.0" y="563.5" width="2.0" height="183.0" fill="#000"/><rect x="430.4" y="566.0" width="4.4" height="178.0" fill="#555" stroke="#000" stroke-width="1"/><rect x="415.8" y="563.5" width="14.6" height="183.0" fill="#a2a2a2" stroke="#000" stroke-width="1.4"/><rect x="420.2" y="563.5" width="5.0" height="183.0" fill="#000"/><rect x="423.0" y="570.0" width="1.0" height="40.0" fill="#a2a2a2"/><rect x="421.6" y="660.0" width="1.0" height="70.0" fill="#a2a2a2"/><rect x="428.4" y="563.5" width="2.0" height="183.0" fill="#000"/><rect x="223.7" y="747.0" width="3.4" height="6.0" fill="#ccc" stroke="#000" stroke-width="0.7"/><rect x="222.7" y="752.5" width="6.0" height="3.0" fill="#000"/><path d="M217.7 759 q8 -5 16 0 v1.6 h-16z" fill="#d0d0d0" stroke="#000" stroke-width=".8"/><rect x="217.7" y="760.0" width="16.0" height="1.6" fill="#000"/><rect x="422.2" y="747.0" width="3.4" height="6.0" fill="#ccc" stroke="#000" stroke-width="0.7"/><rect x="421.2" y="752.5" width="6.0" height="3.0" fill="#000"/><path d="M416.2 759 q8 -5 16 0 v1.6 h-16z" fill="#d0d0d0" stroke="#000" stroke-width=".8"/><rect x="416.2" y="760.0" width="16.0" height="1.6" fill="#000"/><rect x="516.8" y="366" width="10.8" height="108" fill="url(#pole)"/><rect x="431.6" y="250.4" width="178.4" height="119.0" fill="#000"/><rect x="434.0" y="253.2" width="174.2" height="113.0" fill="#a2a2a2"/><rect x="437.6" y="256.4" width="166.8" height="105.2" fill="#a2a2a2" stroke="#000" stroke-width="1.6"/><rect x="513.0" y="362.5" width="13.0" height="4.5" fill="#000"/><rect x="494.0" y="366.8" width="8.0" height="1.0" fill="#a2a2a2"/><rect x="497.0" y="361.6" width="28.0" height="0.8" fill="#a2a2a2"/><rect x="582.0" y="364.0" width="1.6" height="1.6" fill="#000"/><rect x="586.4" y="364.0" width="1.6" height="1.6" fill="#000"/><rect x="590.8" y="364.0" width="1.6" height="1.6" fill="#000"/><rect x="595.2" y="364.0" width="1.6" height="1.6" fill="#000"/><rect x="599.6" y="364.0" width="1.6" height="1.6" fill="#000"/><rect x="437.2" y="338.0" width="1.2" height="12.0" fill="#a2a2a2"/><g transform="translate(0 445.0) scale(1 .9934) translate(0 -444)"><rect x="620.4" y="440.0" width="2.4" height="30.0" fill="#000"/><rect x="614.2" y="411.4" width="5" height="23" rx="2" fill="#a2a2a2" stroke="#000" stroke-width="1"/><rect x="617.6" y="412.6" width="8" height="26" rx="1.5" fill="#a2a2a2" stroke="#000" stroke-width="1.1"/><line x1="621.4" y1="414.0" x2="621.4" y2="437.0" stroke="#000" stroke-width="0.8"/><rect x="446.0" y="444.0" width="242.0" height="11.5" fill="#a2a2a2" stroke="#000" stroke-width="1.4"/><rect x="450.0" y="447.0" width="234.0" height="5.0" fill="#000"/><rect x="454.0" y="448.2" width="226.0" height="1.6" fill="#a2a2a2"/><rect x="454.0" y="450.6" width="226.0" height="1.0" fill="#a2a2a2"/><rect x="444.0" y="455.5" width="244.0" height="12.5" fill="#a2a2a2" stroke="#000" stroke-width="1.4"/><rect x="681.0" y="444.7" width="8.0" height="10.2" fill="#a2a2a2"/><rect x="684.2" y="444.0" width="1.6" height="24.0" fill="#000"/><rect x="678.4" y="460.5" width="1.6" height="1.6" fill="#000"/><circle cx="679.0" cy="449.7" r="2.5" fill="#000"/><rect x="686.4" y="460.5" width="1.6" height="1.6" fill="#000"/><circle cx="691.0" cy="449.7" r="2.5" fill="#000"/><polygon points="505.5,445.0 508.0,445.0 506.5,456.0 504.0,456.0" fill="#a2a2a2" stroke="#000" stroke-width="0.9"/><polygon points="562.5,445.0 565.0,445.0 563.5,456.0 561.0,456.0" fill="#a2a2a2" stroke="#000" stroke-width="0.9"/><polygon points="617.0,456.0 620.0,447.0 625.0,444.0 625.0,456.0" fill="#8e8e8e" stroke="#000" stroke-width="0.9"/><rect x="614.0" y="455.0" width="20.0" height="12.0" fill="#a2a2a2" stroke="#000" stroke-width="1"/><rect x="606.0" y="462.0" width="8.0" height="1.6" fill="#000"/><rect x="606.0" y="466.0" width="9.0" height="1.6" fill="#000"/><rect x="616.5" y="460.0" width="2.0" height="2.0" fill="#000"/><rect x="621.0" y="460.0" width="2.0" height="2.0" fill="#000"/><polygon points="444.0,497.0 448.0,478.0 454.0,478.0 454.0,497.0" fill="#8e8e8e" stroke="#000" stroke-width="1"/><polygon points="668.0,478.0 686.0,478.0 682.0,497.0 668.0,497.0" fill="#8e8e8e" stroke="#000" stroke-width="1"/><rect x="670.0" y="482.0" width="7.0" height="12.0" fill="#000"/><rect x="671.5" y="485.0" width="4.0" height="4.0" fill="#a2a2a2"/><polygon points="453.0,467.0 494.0,467.0 494.0,474.0 668.0,474.0 668.0,496.0 453.0,496.0" fill="#a2a2a2" stroke="#000" stroke-width="1.5"/><line x1="494.0" y1="472.2" x2="666.0" y2="472.2" stroke="#000" stroke-width="1"/><rect x="443.0" y="497.5" width="239.0" height="5.0" fill="#a2a2a2" stroke="#000" stroke-width="1.3"/><rect x="543.0" y="464.5" width="9.0" height="2.6" fill="#000"/><rect x="555.0" y="464.5" width="9.0" height="2.6" fill="#000"/><rect x="545.0" y="468.5" width="20.0" height="1.6" fill="#a2a2a2" stroke="#000" stroke-width="0.8"/><rect x="471.0" y="502.0" width="183.0" height="13.5" fill="#000"/><rect x="471.0" y="502.8" width="183.0" height="4.0" fill="#a2a2a2"/><rect x="521.0" y="505.2" width="103.0" height="0.9" fill="#000"/><rect x="471.0" y="509.6" width="183.0" height="3.8" fill="#a2a2a2"/><rect x="477.0" y="516.2" width="172.0" height="11.2" fill="#a2a2a2" stroke="#000" stroke-width="1.3"/><rect x="472.5" y="517.0" width="3.5" height="3.0" fill="#000"/><rect x="472.5" y="523.0" width="3.5" height="3.0" fill="#000"/><rect x="649.5" y="519.0" width="3.5" height="4.5" fill="#ddd" stroke="#000" stroke-width="0.7"/><rect x="543.0" y="525.5" width="9.0" height="3.0" fill="#000"/><rect x="556.0" y="525.5" width="9.0" height="3.0" fill="#000"/><rect x="471.0" y="537.0" width="183.0" height="33.0" fill="#000"/><rect x="475.0" y="537.6" width="179.0" height="7.6" fill="#a2a2a2"/><rect x="475.0" y="545.2" width="24.0" height="2.6" fill="#a2a2a2"/><rect x="475.0" y="548.4" width="179.0" height="4.6" fill="#a2a2a2"/><rect x="531.0" y="553.0" width="100.0" height="1.0" fill="#000"/><rect x="475.0" y="553.0" width="60.0" height="2.2" fill="#a2a2a2"/><rect x="471.0" y="556.8" width="183.0" height="4.2" fill="#a2a2a2"/><rect x="471.0" y="561.0" width="100.0" height="1.4" fill="#a2a2a2"/><rect x="471.0" y="565.0" width="183.0" height="4.0" fill="#a2a2a2"/><rect x="547.5" y="529" width="15.5" height="17" rx="2.5" fill="#a2a2a2" stroke="#000" stroke-width="1.2"/><rect x="605.0" y="527.5" width="4.5" height="8.0" fill="#ddd" stroke="#000" stroke-width="0.8"/><rect x="471.0" y="570.3" width="183.0" height="160.0" fill="#a2a2a2"/><rect x="489.0" y="729.6" width="143.0" height="1.6" fill="#000"/><rect x="471.0" y="730.2" width="183.0" height="16.0" fill="#000"/><rect x="471.0" y="731.8" width="183.0" height="3.8" fill="#a2a2a2"/><rect x="471.0" y="740.2" width="183.0" height="4.8" fill="#a2a2a2"/><rect x="473.0" y="737.6" width="42.0" height="1.2" fill="#a2a2a2"/><rect x="606.0" y="738.2" width="48.0" height="1.2" fill="#a2a2a2"/><rect x="456.4" y="502.0" width="14.8" height="244.3" fill="#a2a2a2" stroke="#000" stroke-width="1.4"/><rect x="460.7" y="502.0" width="5.3" height="244.3" fill="#000"/><rect x="464.2" y="611.9" width="1.0" height="122.1" fill="#a2a2a2"/><rect x="462.0" y="508.0" width="1.0" height="44.0" fill="#a2a2a2"/><rect x="469.1" y="502.0" width="2.2" height="244.3" fill="#000"/><rect x="669.9" y="505.0" width="3.6" height="238.3" fill="#484848" stroke="#000" stroke-width="1"/><rect x="654.1" y="502.0" width="15.6" height="244.3" fill="#a2a2a2" stroke="#000" stroke-width="1.4"/><rect x="658.9" y="502.0" width="5.0" height="244.3" fill="#000"/><rect x="661.9" y="506.0" width="1.0" height="48.9" fill="#a2a2a2"/><rect x="660.1" y="624.1" width="1.0" height="102.6" fill="#a2a2a2"/><rect x="667.9" y="502.0" width="2.0" height="244.3" fill="#000"/><rect x="486.0" y="745.9" width="8.0" height="3.6" fill="#a2a2a2" stroke="#000" stroke-width="1"/><circle cx="489.1" cy="753.3" r="6.4" fill="#a2a2a2" stroke="#000" stroke-width="1.5"/><circle cx="489.1" cy="753.3" r="1.3" fill="#000"/><rect x="485.5" y="757.5" width="7.0" height="1.6" fill="#000"/><rect x="458.5" y="745.3" width="25.5" height="4.6" fill="#a2a2a2" stroke="#000" stroke-width="1.2"/><rect x="458.5" y="749.9" width="24.0" height="2.4" fill="#000"/><rect x="460.5" y="752.5" width="21.500" height="4.400" rx="1.5" fill="url(#cgl)" stroke="#000" stroke-width=".9"/><rect x="462.1" y="756.9" width="18.6" height="6.0" fill="#000"/><rect x="463.7" y="758.7" width="2.6" height="1.3" fill="#ddd"/><rect x="475.1" y="758.7" width="1.2" height="1.3" fill="#ddd"/><rect x="477.5" y="758.3" width="1.2" height="2.0" fill="#ddd"/><rect x="462.7" y="761.5" width="5.0" height="1.0" fill="#a2a2a2"/><rect x="475.0" y="761.5" width="5.4" height="1.0" fill="#a2a2a2"/><rect x="468.1" y="757.7" width="6.0" height="9.6" fill="#b4b4b4" stroke="#000" stroke-width="1"/><path d="M458.9 763.9 q1 -1.600 3 -1.600 h6.200 v4.400 h6 v-4.400 h6.600 q2.600 0 3 1.600 v6.400 q-12.500 2.400 -24.800 0z" fill="url(#cg)" stroke="#000" stroke-width="1.1"/><polygon points="466.9,771.7 475.9,771.7 474.5,776.3 468.1,776.3" fill="#8e8e8e" stroke="#000" stroke-width="1.1"/><rect x="645.6" y="745.3" width="24.4" height="4.4" fill="#a2a2a2" stroke="#000" stroke-width="1.2"/><rect x="645.6" y="749.7" width="24.0" height="2.4" fill="#000"/><polygon points="648.6,751.3 653.2,753.3 654.4,762.5 651.4,763.3 651.4,765.1 643.6,765.1 645.0,760.3 647.2,753.3" fill="#a2a2a2" stroke="#000" stroke-width="1.1"/><rect x="653.0" y="752.1" width="16.400" height="3" rx="1.2" fill="url(#cgl)" stroke="#000" stroke-width=".8"/><rect x="653.6" y="755.1" width="16.4" height="8.8" fill="#000"/><rect x="669.0" y="752.3" width="2.2" height="11.4" fill="#a2a2a2" stroke="#000" stroke-width="0.7"/><rect x="655.6" y="755.9" width="11.0" height="1.4" fill="#999"/><rect x="656.4" y="758.7" width="1.0" height="1.0" fill="#a2a2a2"/><rect x="659.4" y="758.5" width="3.0" height="1.2" fill="#ddd"/><rect x="664.4" y="758.5" width="1.2" height="1.2" fill="#ddd"/><rect x="667.0" y="758.5" width="1.4" height="1.2" fill="#ccc"/><rect x="655.4" y="761.3" width="14.0" height="1.2" fill="#c4c4c4"/><path d="M652.0 764.7 h18.800 v6 q-9 1.800 -18.800 .6z" fill="url(#cg)" stroke="#000" stroke-width="1.1"/><path d="M651.5 766.7 A7.600 7.600 0 1 1 639.6 764.9 L643.4 765.7 h8.100z" fill="#a2a2a2" stroke="#000" stroke-width="1.5"/><circle cx="645.0" cy="770.7" r="4.600" fill="none" stroke="#000" stroke-width=".8" stroke-dasharray="2.400 1.200"/><circle cx="645.0" cy="770.7" r="1.500" fill="#000"/></g><g transform="translate(0 444.0) scale(1 .9934) translate(0 -444)"><polygon points="741.0,429.5 748.0,428.5 746.0,439.5 739.0,439.5" fill="#a2a2a2" stroke="#000" stroke-width="1"/><rect x="737.0" y="438.5" width="12.0" height="5.0" fill="#a2a2a2" stroke="#000" stroke-width="1"/><rect x="741.5" y="443.5" width="2.0" height="12.0" fill="#000"/><polygon points="867.0,429.5 874.0,428.5 872.0,439.5 865.0,439.5" fill="#a2a2a2" stroke="#000" stroke-width="1"/><rect x="863.0" y="438.5" width="12.0" height="5.0" fill="#a2a2a2" stroke="#000" stroke-width="1"/><rect x="867.5" y="443.5" width="2.0" height="12.0" fill="#000"/><rect x="684.0" y="444.0" width="244.0" height="11.5" fill="#a2a2a2" stroke="#000" stroke-width="1.4"/><rect x="688.0" y="447.0" width="236.0" height="5.0" fill="#000"/><rect x="692.0" y="448.2" width="228.0" height="1.6" fill="#a2a2a2"/><rect x="692.0" y="450.6" width="228.0" height="1.0" fill="#a2a2a2"/><rect x="684.0" y="455.5" width="244.0" height="12.5" fill="#a2a2a2" stroke="#000" stroke-width="1.4"/><rect x="681.0" y="444.7" width="8.0" height="10.2" fill="#a2a2a2"/><rect x="684.2" y="444.0" width="1.6" height="24.0" fill="#000"/><rect x="678.4" y="460.5" width="1.6" height="1.6" fill="#000"/><circle cx="679.0" cy="449.7" r="2.5" fill="#000"/><rect x="686.4" y="460.5" width="1.6" height="1.6" fill="#000"/><circle cx="691.0" cy="449.7" r="2.5" fill="#000"/><rect x="921.0" y="444.7" width="8.0" height="10.2" fill="#a2a2a2"/><rect x="924.2" y="444.0" width="1.6" height="24.0" fill="#000"/><rect x="918.4" y="460.5" width="1.6" height="1.6" fill="#000"/><circle cx="919.0" cy="449.7" r="2.5" fill="#000"/><rect x="926.4" y="460.5" width="1.6" height="1.6" fill="#000"/><circle cx="931.0" cy="449.7" r="2.5" fill="#000"/><path d="M788 450.6 h5 l3.5 3 l3.5 -3 h5 v-1.4 h-17z" fill="#a2a2a2" stroke="#000" stroke-width=".7"/><rect x="862.0" y="455.0" width="12.0" height="12.0" fill="#a2a2a2" stroke="#000" stroke-width="1"/><rect x="854.0" y="462.0" width="8.0" height="1.6" fill="#000"/><rect x="854.0" y="466.0" width="9.0" height="1.6" fill="#000"/><rect x="864.5" y="460.0" width="2.0" height="2.0" fill="#000"/><rect x="869.0" y="460.0" width="2.0" height="2.0" fill="#000"/><polygon points="684.0,497.0 688.0,478.0 694.0,478.0 694.0,497.0" fill="#8e8e8e" stroke="#000" stroke-width="1"/><polygon points="908.0,478.0 926.0,478.0 922.0,497.0 908.0,497.0" fill="#8e8e8e" stroke="#000" stroke-width="1"/><rect x="910.0" y="482.0" width="7.0" height="12.0" fill="#000"/><rect x="911.5" y="485.0" width="4.0" height="4.0" fill="#a2a2a2"/><polygon points="693.0,467.0 734.0,467.0 734.0,474.0 908.0,474.0 908.0,496.0 693.0,496.0" fill="#a2a2a2" stroke="#000" stroke-width="1.5"/><line x1="734.0" y1="472.2" x2="906.0" y2="472.2" stroke="#000" stroke-width="1"/><rect x="683.0" y="497.5" width="239.0" height="5.0" fill="#a2a2a2" stroke="#000" stroke-width="1.3"/><rect x="783.0" y="464.5" width="9.0" height="2.6" fill="#000"/><rect x="795.0" y="464.5" width="9.0" height="2.6" fill="#000"/><rect x="785.0" y="468.5" width="20.0" height="1.6" fill="#a2a2a2" stroke="#000" stroke-width="0.8"/><rect x="711.0" y="502.0" width="183.0" height="13.5" fill="#000"/><rect x="711.0" y="502.8" width="183.0" height="4.0" fill="#a2a2a2"/><rect x="761.0" y="505.2" width="103.0" height="0.9" fill="#000"/><rect x="711.0" y="509.6" width="183.0" height="3.8" fill="#a2a2a2"/><rect x="717.0" y="516.2" width="172.0" height="11.2" fill="#a2a2a2" stroke="#000" stroke-width="1.3"/><rect x="712.5" y="517.0" width="3.5" height="3.0" fill="#000"/><rect x="712.5" y="523.0" width="3.5" height="3.0" fill="#000"/><rect x="889.5" y="519.0" width="3.5" height="4.5" fill="#ddd" stroke="#000" stroke-width="0.7"/><rect x="783.0" y="525.5" width="9.0" height="3.0" fill="#000"/><rect x="796.0" y="525.5" width="9.0" height="3.0" fill="#000"/><rect x="722.0" y="529.5" width="18.0" height="13.0" fill="#a2a2a2" stroke="#000" stroke-width="1.2"/><rect x="741.0" y="529.0" width="3.5" height="13.0" fill="#a2a2a2" stroke="#000" stroke-width="0.8"/><rect x="867.0" y="530.5" width="17.0" height="13.0" fill="#a2a2a2" stroke="#000" stroke-width="1.2"/><rect x="862.0" y="528.0" width="3.0" height="15.0" fill="#a2a2a2" stroke="#000" stroke-width="0.8"/><rect x="744.0" y="538.2" width="10.0" height="3.2" fill="#a2a2a2" stroke="#000" stroke-width="0.8"/><rect x="851.0" y="538.2" width="12.0" height="3.2" fill="#a2a2a2" stroke="#000" stroke-width="0.8"/><rect x="787.5" y="529.5" width="15.5" height="15" rx="2.5" fill="#a2a2a2" stroke="#000" stroke-width="1.2"/><rect x="845.0" y="527.5" width="4.5" height="7.0" fill="#ddd" stroke="#000" stroke-width="0.8"/><rect x="711.0" y="541.6" width="183.0" height="30.0" fill="#000"/><rect x="714.0" y="536.2" width="177.0" height="6.0" fill="#000"/><rect x="716.0" y="538.6" width="6.0" height="3.0" fill="#a2a2a2"/><rect x="758.0" y="538.6" width="29.0" height="3.0" fill="#a2a2a2"/><rect x="804.0" y="538.6" width="47.0" height="3.0" fill="#a2a2a2"/><rect x="713.0" y="546.4" width="181.0" height="3.0" fill="#a2a2a2"/><rect x="773.0" y="551.2" width="100.0" height="0.9" fill="#a2a2a2"/><rect x="783.0" y="553.2" width="55.0" height="0.9" fill="#a2a2a2"/><rect x="711.0" y="557.6" width="183.0" height="3.9" fill="#a2a2a2"/><rect x="711.0" y="563.6" width="55.0" height="1.0" fill="#a2a2a2"/><rect x="856.0" y="562.6" width="38.0" height="1.0" fill="#a2a2a2"/><rect x="711.0" y="565.1" width="183.0" height="4.2" fill="#a2a2a2"/><rect x="722.0" y="530.6" width="17.0" height="14.0" fill="#a2a2a2" stroke="#000" stroke-width="1.2"/><rect x="867.0" y="530.6" width="17.0" height="12.6" fill="#a2a2a2" stroke="#000" stroke-width="1.2"/><rect x="787.5" y="530" width="15" height="15.5" rx="2" fill="#a2a2a2" stroke="#000" stroke-width="1.2"/><rect x="711.0" y="571.0" width="183.0" height="160.0" fill="#a2a2a2"/><rect x="729.0" y="729.6" width="143.0" height="1.6" fill="#000"/><rect x="711.0" y="730.2" width="183.0" height="16.0" fill="#000"/><rect x="711.0" y="731.8" width="183.0" height="3.8" fill="#a2a2a2"/><rect x="711.0" y="740.2" width="183.0" height="4.8" fill="#a2a2a2"/><rect x="713.0" y="737.6" width="42.0" height="1.2" fill="#a2a2a2"/><rect x="846.0" y="738.2" width="48.0" height="1.2" fill="#a2a2a2"/><rect x="696.4" y="502.0" width="14.8" height="244.3" fill="#a2a2a2" stroke="#000" stroke-width="1.4"/><rect x="700.7" y="502.0" width="5.3" height="244.3" fill="#000"/><rect x="704.2" y="611.9" width="1.0" height="122.1" fill="#a2a2a2"/><rect x="702.0" y="508.0" width="1.0" height="44.0" fill="#a2a2a2"/><rect x="709.1" y="502.0" width="2.2" height="244.3" fill="#000"/><rect x="909.9" y="505.0" width="3.6" height="238.3" fill="#484848" stroke="#000" stroke-width="1"/><rect x="894.1" y="502.0" width="15.6" height="244.3" fill="#a2a2a2" stroke="#000" stroke-width="1.4"/><rect x="898.9" y="502.0" width="5.0" height="244.3" fill="#000"/><rect x="901.9" y="506.0" width="1.0" height="48.9" fill="#a2a2a2"/><rect x="900.1" y="624.1" width="1.0" height="102.6" fill="#a2a2a2"/><rect x="907.9" y="502.0" width="2.0" height="244.3" fill="#000"/><rect x="726.0" y="745.9" width="8.0" height="3.6" fill="#a2a2a2" stroke="#000" stroke-width="1"/><circle cx="729.1" cy="753.3" r="6.4" fill="#a2a2a2" stroke="#000" stroke-width="1.5"/><circle cx="729.1" cy="753.3" r="1.3" fill="#000"/><rect x="725.5" y="757.5" width="7.0" height="1.6" fill="#000"/><rect x="698.5" y="745.3" width="25.5" height="4.6" fill="#a2a2a2" stroke="#000" stroke-width="1.2"/><rect x="698.5" y="749.9" width="24.0" height="2.4" fill="#000"/><rect x="700.5" y="752.5" width="21.500" height="4.400" rx="1.5" fill="url(#cgl)" stroke="#000" stroke-width=".9"/><rect x="702.1" y="756.9" width="18.6" height="6.0" fill="#000"/><rect x="703.7" y="758.7" width="2.6" height="1.3" fill="#ddd"/><rect x="715.1" y="758.7" width="1.2" height="1.3" fill="#ddd"/><rect x="717.5" y="758.3" width="1.2" height="2.0" fill="#ddd"/><rect x="702.7" y="761.5" width="5.0" height="1.0" fill="#a2a2a2"/><rect x="715.0" y="761.5" width="5.4" height="1.0" fill="#a2a2a2"/><rect x="708.1" y="757.7" width="6.0" height="9.6" fill="#b4b4b4" stroke="#000" stroke-width="1"/><path d="M698.9 763.9 q1 -1.600 3 -1.600 h6.200 v4.400 h6 v-4.400 h6.600 q2.600 0 3 1.600 v6.400 q-12.500 2.400 -24.800 0z" fill="url(#cg)" stroke="#000" stroke-width="1.1"/><polygon points="706.9,771.7 715.9,771.7 714.5,776.3 708.1,776.3" fill="#8e8e8e" stroke="#000" stroke-width="1.1"/><rect x="885.6" y="745.3" width="24.4" height="4.4" fill="#a2a2a2" stroke="#000" stroke-width="1.2"/><rect x="885.6" y="749.7" width="24.0" height="2.4" fill="#000"/><polygon points="888.6,751.3 893.2,753.3 894.4,762.5 891.4,763.3 891.4,765.1 883.6,765.1 885.0,760.3 887.2,753.3" fill="#a2a2a2" stroke="#000" stroke-width="1.1"/><rect x="893.0" y="752.1" width="16.400" height="3" rx="1.2" fill="url(#cgl)" stroke="#000" stroke-width=".8"/><rect x="893.6" y="755.1" width="16.4" height="8.8" fill="#000"/><rect x="909.0" y="752.3" width="2.2" height="11.4" fill="#a2a2a2" stroke="#000" stroke-width="0.7"/><rect x="895.6" y="755.9" width="11.0" height="1.4" fill="#999"/><rect x="896.4" y="758.7" width="1.0" height="1.0" fill="#a2a2a2"/><rect x="899.4" y="758.5" width="3.0" height="1.2" fill="#ddd"/><rect x="904.4" y="758.5" width="1.2" height="1.2" fill="#ddd"/><rect x="907.0" y="758.5" width="1.4" height="1.2" fill="#ccc"/><rect x="895.4" y="761.3" width="14.0" height="1.2" fill="#c4c4c4"/><path d="M892.0 764.7 h18.800 v6 q-9 1.800 -18.800 .6z" fill="url(#cg)" stroke="#000" stroke-width="1.1"/><path d="M891.5 766.7 A7.600 7.600 0 1 1 879.6 764.9 L883.4 765.7 h8.100z" fill="#a2a2a2" stroke="#000" stroke-width="1.5"/><circle cx="885.0" cy="770.7" r="4.600" fill="none" stroke="#000" stroke-width=".8" stroke-dasharray="2.400 1.200"/><circle cx="885.0" cy="770.7" r="1.500" fill="#000"/></g><g transform="translate(0 442.6) scale(1 .9934) translate(0 -444)"><polygon points="981.0,429.5 988.0,428.5 986.0,439.5 979.0,439.5" fill="#a2a2a2" stroke="#000" stroke-width="1"/><rect x="977.0" y="438.5" width="12.0" height="5.0" fill="#a2a2a2" stroke="#000" stroke-width="1"/><rect x="981.5" y="443.5" width="2.0" height="12.0" fill="#000"/><polygon points="1107.0,429.5 1114.0,428.5 1112.0,439.5 1105.0,439.5" fill="#a2a2a2" stroke="#000" stroke-width="1"/><rect x="1103.0" y="438.5" width="12.0" height="5.0" fill="#a2a2a2" stroke="#000" stroke-width="1"/><rect x="1107.5" y="443.5" width="2.0" height="12.0" fill="#000"/><rect x="924.0" y="444.0" width="242.0" height="11.5" fill="#a2a2a2" stroke="#000" stroke-width="1.4"/><rect x="928.0" y="447.0" width="234.0" height="5.0" fill="#000"/><rect x="932.0" y="448.2" width="226.0" height="1.6" fill="#a2a2a2"/><rect x="932.0" y="450.6" width="226.0" height="1.0" fill="#a2a2a2"/><rect x="924.0" y="455.5" width="240.0" height="12.5" fill="#a2a2a2" stroke="#000" stroke-width="1.4"/><rect x="921.0" y="444.7" width="8.0" height="10.2" fill="#a2a2a2"/><rect x="924.2" y="444.0" width="1.6" height="24.0" fill="#000"/><rect x="918.4" y="460.5" width="1.6" height="1.6" fill="#000"/><circle cx="919.0" cy="449.7" r="2.5" fill="#000"/><rect x="926.4" y="460.5" width="1.6" height="1.6" fill="#000"/><circle cx="931.0" cy="449.7" r="2.5" fill="#000"/><path d="M1028 450.6 h5 l3.5 3 l3.5 -3 h5 v-1.4 h-17z" fill="#a2a2a2" stroke="#000" stroke-width=".7"/><rect x="1102.0" y="455.0" width="12.0" height="12.0" fill="#a2a2a2" stroke="#000" stroke-width="1"/><rect x="1094.0" y="462.0" width="8.0" height="1.6" fill="#000"/><rect x="1094.0" y="466.0" width="9.0" height="1.6" fill="#000"/><rect x="1104.5" y="460.0" width="2.0" height="2.0" fill="#000"/><rect x="1109.0" y="460.0" width="2.0" height="2.0" fill="#000"/><polygon points="924.0,497.0 928.0,478.0 934.0,478.0 934.0,497.0" fill="#8e8e8e" stroke="#000" stroke-width="1"/><polygon points="1148.0,478.0 1166.0,478.0 1162.0,497.0 1148.0,497.0" fill="#8e8e8e" stroke="#000" stroke-width="1"/><rect x="1150.0" y="482.0" width="7.0" height="12.0" fill="#000"/><rect x="1151.5" y="485.0" width="4.0" height="4.0" fill="#a2a2a2"/><polygon points="933.0,467.0 974.0,467.0 974.0,474.0 1148.0,474.0 1148.0,496.0 933.0,496.0" fill="#a2a2a2" stroke="#000" stroke-width="1.5"/><line x1="974.0" y1="472.2" x2="1146.0" y2="472.2" stroke="#000" stroke-width="1"/><rect x="923.0" y="497.5" width="239.0" height="5.0" fill="#a2a2a2" stroke="#000" stroke-width="1.3"/><rect x="1023.0" y="464.5" width="9.0" height="2.6" fill="#000"/><rect x="1035.0" y="464.5" width="9.0" height="2.6" fill="#000"/><rect x="1025.0" y="468.5" width="20.0" height="1.6" fill="#a2a2a2" stroke="#000" stroke-width="0.8"/><rect x="951.0" y="502.0" width="183.0" height="13.5" fill="#000"/><rect x="951.0" y="502.8" width="183.0" height="4.0" fill="#a2a2a2"/><rect x="1001.0" y="505.2" width="103.0" height="0.9" fill="#000"/><rect x="951.0" y="509.6" width="183.0" height="3.8" fill="#a2a2a2"/><rect x="957.0" y="516.2" width="172.0" height="11.2" fill="#a2a2a2" stroke="#000" stroke-width="1.3"/><rect x="952.5" y="517.0" width="3.5" height="3.0" fill="#000"/><rect x="952.5" y="523.0" width="3.5" height="3.0" fill="#000"/><rect x="1129.5" y="519.0" width="3.5" height="4.5" fill="#ddd" stroke="#000" stroke-width="0.7"/><rect x="1023.0" y="525.5" width="9.0" height="3.0" fill="#000"/><rect x="1036.0" y="525.5" width="9.0" height="3.0" fill="#000"/><rect x="962.0" y="529.5" width="18.0" height="13.0" fill="#a2a2a2" stroke="#000" stroke-width="1.2"/><rect x="981.0" y="529.0" width="3.5" height="13.0" fill="#a2a2a2" stroke="#000" stroke-width="0.8"/><rect x="1107.0" y="530.5" width="17.0" height="13.0" fill="#a2a2a2" stroke="#000" stroke-width="1.2"/><rect x="1102.0" y="528.0" width="3.0" height="15.0" fill="#a2a2a2" stroke="#000" stroke-width="0.8"/><rect x="984.0" y="538.2" width="10.0" height="3.2" fill="#a2a2a2" stroke="#000" stroke-width="0.8"/><rect x="1091.0" y="538.2" width="12.0" height="3.2" fill="#a2a2a2" stroke="#000" stroke-width="0.8"/><rect x="1027.5" y="529.5" width="15.5" height="15" rx="2.5" fill="#a2a2a2" stroke="#000" stroke-width="1.2"/><rect x="1085.0" y="527.5" width="4.5" height="7.0" fill="#ddd" stroke="#000" stroke-width="0.8"/><rect x="951.0" y="541.6" width="183.0" height="30.0" fill="#000"/><rect x="954.0" y="536.2" width="177.0" height="6.0" fill="#000"/><rect x="956.0" y="538.6" width="6.0" height="3.0" fill="#a2a2a2"/><rect x="998.0" y="538.6" width="29.0" height="3.0" fill="#a2a2a2"/><rect x="1044.0" y="538.6" width="47.0" height="3.0" fill="#a2a2a2"/><rect x="953.0" y="546.4" width="181.0" height="3.0" fill="#a2a2a2"/><rect x="1013.0" y="551.2" width="100.0" height="0.9" fill="#a2a2a2"/><rect x="1023.0" y="553.2" width="55.0" height="0.9" fill="#a2a2a2"/><rect x="951.0" y="557.6" width="183.0" height="3.9" fill="#a2a2a2"/><rect x="951.0" y="563.6" width="55.0" height="1.0" fill="#a2a2a2"/><rect x="1096.0" y="562.6" width="38.0" height="1.0" fill="#a2a2a2"/><rect x="951.0" y="565.1" width="183.0" height="4.2" fill="#a2a2a2"/><rect x="962.0" y="530.6" width="17.0" height="14.0" fill="#a2a2a2" stroke="#000" stroke-width="1.2"/><rect x="1107.0" y="530.6" width="17.0" height="12.6" fill="#a2a2a2" stroke="#000" stroke-width="1.2"/><rect x="1027.5" y="530" width="15" height="15.5" rx="2" fill="#a2a2a2" stroke="#000" stroke-width="1.2"/><rect x="951.0" y="571.0" width="183.0" height="160.0" fill="#a2a2a2"/><rect x="969.0" y="729.6" width="143.0" height="1.6" fill="#000"/><rect x="951.0" y="730.2" width="183.0" height="16.0" fill="#000"/><rect x="951.0" y="731.8" width="183.0" height="3.8" fill="#a2a2a2"/><rect x="951.0" y="740.2" width="183.0" height="4.8" fill="#a2a2a2"/><rect x="953.0" y="737.6" width="42.0" height="1.2" fill="#a2a2a2"/><rect x="1086.0" y="738.2" width="48.0" height="1.2" fill="#a2a2a2"/><rect x="936.4" y="502.0" width="14.8" height="244.3" fill="#a2a2a2" stroke="#000" stroke-width="1.4"/><rect x="940.7" y="502.0" width="5.3" height="244.3" fill="#000"/><rect x="944.2" y="611.9" width="1.0" height="122.1" fill="#a2a2a2"/><rect x="942.0" y="508.0" width="1.0" height="44.0" fill="#a2a2a2"/><rect x="949.1" y="502.0" width="2.2" height="244.3" fill="#000"/><rect x="1149.9" y="505.0" width="3.6" height="238.3" fill="#484848" stroke="#000" stroke-width="1"/><rect x="1134.1" y="502.0" width="15.6" height="244.3" fill="#a2a2a2" stroke="#000" stroke-width="1.4"/><rect x="1138.9" y="502.0" width="5.0" height="244.3" fill="#000"/><rect x="1141.9" y="506.0" width="1.0" height="48.9" fill="#a2a2a2"/><rect x="1140.1" y="624.1" width="1.0" height="102.6" fill="#a2a2a2"/><rect x="1147.9" y="502.0" width="2.0" height="244.3" fill="#000"/><rect x="966.0" y="745.9" width="8.0" height="3.6" fill="#a2a2a2" stroke="#000" stroke-width="1"/><circle cx="969.1" cy="753.3" r="6.4" fill="#a2a2a2" stroke="#000" stroke-width="1.5"/><circle cx="969.1" cy="753.3" r="1.3" fill="#000"/><rect x="965.5" y="757.5" width="7.0" height="1.6" fill="#000"/><rect x="938.5" y="745.3" width="25.5" height="4.6" fill="#a2a2a2" stroke="#000" stroke-width="1.2"/><rect x="938.5" y="749.9" width="24.0" height="2.4" fill="#000"/><rect x="940.5" y="752.5" width="21.500" height="4.400" rx="1.5" fill="url(#cgl)" stroke="#000" stroke-width=".9"/><rect x="942.1" y="756.9" width="18.6" height="6.0" fill="#000"/><rect x="943.7" y="758.7" width="2.6" height="1.3" fill="#ddd"/><rect x="955.1" y="758.7" width="1.2" height="1.3" fill="#ddd"/><rect x="957.5" y="758.3" width="1.2" height="2.0" fill="#ddd"/><rect x="942.7" y="761.5" width="5.0" height="1.0" fill="#a2a2a2"/><rect x="955.0" y="761.5" width="5.4" height="1.0" fill="#a2a2a2"/><rect x="948.1" y="757.7" width="6.0" height="9.6" fill="#b4b4b4" stroke="#000" stroke-width="1"/><path d="M938.9 763.9 q1 -1.600 3 -1.600 h6.200 v4.400 h6 v-4.400 h6.600 q2.600 0 3 1.600 v6.400 q-12.500 2.400 -24.800 0z" fill="url(#cg)" stroke="#000" stroke-width="1.1"/><polygon points="946.9,771.7 955.9,771.7 954.5,776.3 948.1,776.3" fill="#8e8e8e" stroke="#000" stroke-width="1.1"/><rect x="1125.6" y="745.3" width="24.4" height="4.4" fill="#a2a2a2" stroke="#000" stroke-width="1.2"/><rect x="1125.6" y="749.7" width="24.0" height="2.4" fill="#000"/><polygon points="1128.6,751.3 1133.2,753.3 1134.4,762.5 1131.4,763.3 1131.4,765.1 1123.6,765.1 1125.0,760.3 1127.2,753.3" fill="#a2a2a2" stroke="#000" stroke-width="1.1"/><rect x="1133.0" y="752.1" width="16.400" height="3" rx="1.2" fill="url(#cgl)" stroke="#000" stroke-width=".8"/><rect x="1133.6" y="755.1" width="16.4" height="8.8" fill="#000"/><rect x="1149.0" y="752.3" width="2.2" height="11.4" fill="#a2a2a2" stroke="#000" stroke-width="0.7"/><rect x="1135.6" y="755.9" width="11.0" height="1.4" fill="#999"/><rect x="1136.4" y="758.7" width="1.0" height="1.0" fill="#a2a2a2"/><rect x="1139.4" y="758.5" width="3.0" height="1.2" fill="#ddd"/><rect x="1144.4" y="758.5" width="1.2" height="1.2" fill="#ddd"/><rect x="1147.0" y="758.5" width="1.4" height="1.2" fill="#ccc"/><rect x="1135.4" y="761.3" width="14.0" height="1.2" fill="#c4c4c4"/><path d="M1132.0 764.7 h18.800 v6 q-9 1.800 -18.800 .6z" fill="url(#cg)" stroke="#000" stroke-width="1.1"/><path d="M1131.5 766.7 A7.600 7.600 0 1 1 1119.6 764.9 L1123.4 765.7 h8.100z" fill="#a2a2a2" stroke="#000" stroke-width="1.5"/><circle cx="1125.0" cy="770.7" r="4.600" fill="none" stroke="#000" stroke-width=".8" stroke-dasharray="2.400 1.200"/><circle cx="1125.0" cy="770.7" r="1.500" fill="#000"/></g><path d="M990 439.2 l11 -4.2 v2.6 h37 v3.2 h-37 v2.6z" fill="url(#garrow)"/><path d="M1026 437.4 h8 l-1.5 2.6 h-8z" fill="#c8c8c8" stroke="#555" stroke-width=".4"/><circle cx="1040.6" cy="437.8" r="2.6" fill="#8a8a8a"/><circle cx="1039.8" cy="439.6" r="2.6" fill="#e01010"/><path d="M1037.5 441.5 l4 -4" stroke="#ddd" stroke-width=".8"/><path d="M1046 437 h3 v3 h-3 M1051 437 h3 v3 h-3" stroke="#ccc" stroke-width=".7" fill="none" stroke-dasharray="1.5 1"/></svg>
<div class="vbtn" style="left:64px;top:113px"><svg width="24" height="24" viewBox="0 0 24 24"><rect x="3.2" y="4.8" width="17.6" height="3.800" fill="#46608f"/><rect x="4" y="6.3" width="1" height="1" fill="#7088b4"/><rect x="19" y="6.3" width="1" height="1" fill="#7088b4"/><rect x="3.2" y="10.8" width="17.6" height="3.800" fill="#46608f"/><rect x="4" y="12.3" width="1" height="1" fill="#7088b4"/><rect x="19" y="12.3" width="1" height="1" fill="#7088b4"/><rect x="3.2" y="16.8" width="17.6" height="3.800" fill="#46608f"/><rect x="4" y="18.3" width="1" height="1" fill="#7088b4"/><rect x="19" y="18.3" width="1" height="1" fill="#7088b4"/></svg></div><div class="vbtn" style="left:92px;top:113px"><svg width="24" height="24" viewBox="0 0 24 24"><rect x="5.6" y="6.6" width="12.8" height="10.8" fill="#4a5068"/><rect x="6.2" y="6.6" width="12.2" height="10.2" fill="url(#gl)" stroke="#a8b4d0" stroke-width=".6"/><path d="M3.0 4.0 L6.8 4.0 L5.7 5.1 L7.6 7.0 L6.0 8.6 L4.1 6.7 L3.0 7.8z" fill="#30c828" stroke="#0a8a0a" stroke-width=".5"/><path d="M21.0 4.0 L17.2 4.0 L18.3 5.1 L16.4 7.0 L18.0 8.6 L19.9 6.7 L21.0 7.8z" fill="#30c828" stroke="#0a8a0a" stroke-width=".5"/><path d="M3.0 20.0 L6.8 20.0 L5.7 18.9 L7.6 17.0 L6.0 15.4 L4.1 17.3 L3.0 16.2z" fill="#30c828" stroke="#0a8a0a" stroke-width=".5"/><path d="M21.0 20.0 L17.2 20.0 L18.3 18.9 L16.4 17.0 L18.0 15.4 L19.9 17.3 L21.0 16.2z" fill="#30c828" stroke="#0a8a0a" stroke-width=".5"/></svg></div><div class="vbtn" style="left:120px;top:113px"><svg width="24" height="24" viewBox="0 0 24 24"><path d="M17.6 14.6 l0 0" stroke="#8a8a8a" stroke-width="3" stroke-linecap="round"/><path d="M17.6 14.6 l0 0" stroke="#d8d8d8" stroke-width="1.2" stroke-linecap="round"/><circle cx="13.4" cy="10.4" r="6" fill="url(#glens)" stroke="#8894a8" stroke-width="1.5"/><path d="M8.4 15.4 L3.6 20" stroke="#9a9a9a" stroke-width="3" stroke-linecap="round"/><path d="M4 6 l4 1 M3 9.6 l4 .4 M4 13 l3 -.6" stroke="#c0c8d8" stroke-width="1"/></svg></div><div class="vbtn" style="left:148px;top:113px"><svg width="24" height="24" viewBox="0 0 24 24"><g transform="translate(2 2)"><path d="M2 12 l9 -6 l8 4 l-9 7z" fill="none" stroke="#5a6278" stroke-width=".8"/><path d="M7.5 11.5 V3" stroke="#1c5cf0" stroke-width="2.2"/><path d="M7.5 -.2 l2.8 4.2 h-5.6z" fill="#1c5cf0"/><path d="M7.5 11.5 L15 7" stroke="#18b030" stroke-width="2.2"/><path d="M17.4 5.5 l-4.6 .3 l2.400 3.700z" fill="#18b030"/><path d="M7.5 11.5 L14.5 16" stroke="#e02020" stroke-width="2.2"/><path d="M17 17.600 l-4.600 -.5 l2.600 -3.600z" fill="#e02020"/><circle cx="7.5" cy="11.5" r="1.6" fill="#e8e8e8" stroke="#555" stroke-width=".6"/></g></svg></div><div class="vbtn" style="left:176px;top:113px"><svg width="24" height="24" viewBox="0 0 24 24"><line x1="12.2" y1="3.2" x2="21.3" y2="6.6" stroke="#000" stroke-width="1.25" stroke-linecap="round"/><line x1="21.3" y1="6.6" x2="21.3" y2="16.1" stroke="#000" stroke-width="1.25" stroke-linecap="round"/><line x1="21.3" y1="16.1" x2="12.2" y2="21.2" stroke="#000" stroke-width="1.25" stroke-linecap="round"/><line x1="12.2" y1="21.2" x2="3.2" y2="16.4" stroke="#000" stroke-width="1.25" stroke-linecap="round"/><line x1="3.2" y1="16.4" x2="3.2" y2="6.8" stroke="#000" stroke-width="1.25" stroke-linecap="round"/><line x1="3.2" y1="6.8" x2="12.2" y2="3.2" stroke="#000" stroke-width="1.25" stroke-linecap="round"/><line x1="12.2" y1="10.8" x2="3.2" y2="6.8" stroke="#000" stroke-width="1.25" stroke-linecap="round"/><line x1="12.2" y1="10.8" x2="21.3" y2="6.6" stroke="#000" stroke-width="1.25" stroke-linecap="round"/><line x1="12.2" y1="10.8" x2="12.2" y2="21.2" stroke="#000" stroke-width="1.25" stroke-linecap="round"/><line x1="12.2" y1="10.8" x2="12.2" y2="3.2" stroke="#000" stroke-width="1.25" stroke-linecap="round"/><line x1="12.2" y1="10.8" x2="3.2" y2="16.4" stroke="#000" stroke-width="1.25" stroke-linecap="round"/><line x1="12.2" y1="10.8" x2="21.3" y2="16.1" stroke="#000" stroke-width="1.25" stroke-linecap="round"/><polygon points="12.2,3.2 21.3,6.6 12.2,10.8 3.2,6.8" fill="url(#gc)" stroke="#0a7a0a" stroke-width=".5"/></svg></div><div class="vbtn" style="left:204px;top:113px"><svg width="24" height="24" viewBox="0 0 24 24"><polygon points="3.2,16.4 12.2,10.8 21.3,16.1 12.2,21.2" fill="url(#gc)"/><line x1="12.2" y1="3.2" x2="21.3" y2="6.6" stroke="#000" stroke-width="1.25" stroke-linecap="round"/><line x1="21.3" y1="6.6" x2="21.3" y2="16.1" stroke="#000" stroke-width="1.25" stroke-linecap="round"/><line x1="21.3" y1="16.1" x2="12.2" y2="21.2" stroke="#000" stroke-width="1.25" stroke-linecap="round"/><line x1="12.2" y1="21.2" x2="3.2" y2="16.4" stroke="#000" stroke-width="1.25" stroke-linecap="round"/><line x1="3.2" y1="16.4" x2="3.2" y2="6.8" stroke="#000" stroke-width="1.25" stroke-linecap="round"/><line x1="3.2" y1="6.8" x2="12.2" y2="3.2" stroke="#000" stroke-width="1.25" stroke-linecap="round"/><line x1="12.2" y1="10.8" x2="3.2" y2="6.8" stroke="#000" stroke-width="1.25" stroke-linecap="round"/><line x1="12.2" y1="10.8" x2="21.3" y2="6.6" stroke="#000" stroke-width="1.25" stroke-linecap="round"/><line x1="12.2" y1="10.8" x2="12.2" y2="21.2" stroke="#000" stroke-width="1.25" stroke-linecap="round"/><line x1="12.2" y1="10.8" x2="12.2" y2="3.2" stroke="#000" stroke-width="1.25" stroke-linecap="round"/><line x1="12.2" y1="10.8" x2="3.2" y2="16.4" stroke="#000" stroke-width="1.25" stroke-linecap="round"/><line x1="12.2" y1="10.8" x2="21.3" y2="16.1" stroke="#000" stroke-width="1.25" stroke-linecap="round"/></svg></div><div class="vbtn" style="left:232px;top:113px"><svg width="24" height="24" viewBox="0 0 24 24"><polygon points="3.2,6.8 12.2,3.2 12.2,10.8 3.2,16.4" fill="url(#gc)"/><line x1="12.2" y1="3.2" x2="21.3" y2="6.6" stroke="#000" stroke-width="1.25" stroke-linecap="round"/><line x1="21.3" y1="6.6" x2="21.3" y2="16.1" stroke="#000" stroke-width="1.25" stroke-linecap="round"/><line x1="21.3" y1="16.1" x2="12.2" y2="21.2" stroke="#000" stroke-width="1.25" stroke-linecap="round"/><line x1="12.2" y1="21.2" x2="3.2" y2="16.4" stroke="#000" stroke-width="1.25" stroke-linecap="round"/><line x1="3.2" y1="16.4" x2="3.2" y2="6.8" stroke="#000" stroke-width="1.25" stroke-linecap="round"/><line x1="3.2" y1="6.8" x2="12.2" y2="3.2" stroke="#000" stroke-width="1.25" stroke-linecap="round"/><line x1="12.2" y1="10.8" x2="3.2" y2="6.8" stroke="#000" stroke-width="1.25" stroke-linecap="round"/><line x1="12.2" y1="10.8" x2="21.3" y2="6.6" stroke="#000" stroke-width="1.25" stroke-linecap="round"/><line x1="12.2" y1="10.8" x2="12.2" y2="21.2" stroke="#000" stroke-width="1.25" stroke-linecap="round"/><line x1="12.2" y1="10.8" x2="12.2" y2="3.2" stroke="#000" stroke-width="1.25" stroke-linecap="round"/><line x1="12.2" y1="10.8" x2="3.2" y2="16.4" stroke="#000" stroke-width="1.25" stroke-linecap="round"/><line x1="12.2" y1="10.8" x2="21.3" y2="16.1" stroke="#000" stroke-width="1.25" stroke-linecap="round"/></svg></div><div class="vbtn" style="left:260px;top:113px"><svg width="24" height="24" viewBox="0 0 24 24"><line x1="12.2" y1="3.2" x2="21.3" y2="6.6" stroke="#000" stroke-width="1.25" stroke-linecap="round"/><line x1="21.3" y1="6.6" x2="21.3" y2="16.1" stroke="#000" stroke-width="1.25" stroke-linecap="round"/><line x1="21.3" y1="16.1" x2="12.2" y2="21.2" stroke="#000" stroke-width="1.25" stroke-linecap="round"/><line x1="12.2" y1="21.2" x2="3.2" y2="16.4" stroke="#000" stroke-width="1.25" stroke-linecap="round"/><line x1="3.2" y1="16.4" x2="3.2" y2="6.8" stroke="#000" stroke-width="1.25" stroke-linecap="round"/><line x1="3.2" y1="6.8" x2="12.2" y2="3.2" stroke="#000" stroke-width="1.25" stroke-linecap="round"/><line x1="12.2" y1="10.8" x2="3.2" y2="6.8" stroke="#000" stroke-width="1.25" stroke-linecap="round"/><line x1="12.2" y1="10.8" x2="21.3" y2="6.6" stroke="#000" stroke-width="1.25" stroke-linecap="round"/><line x1="12.2" y1="10.8" x2="12.2" y2="21.2" stroke="#000" stroke-width="1.25" stroke-linecap="round"/><line x1="12.2" y1="10.8" x2="12.2" y2="3.2" stroke="#000" stroke-width="1.25" stroke-linecap="round"/><line x1="12.2" y1="10.8" x2="3.2" y2="16.4" stroke="#000" stroke-width="1.25" stroke-linecap="round"/><line x1="12.2" y1="10.8" x2="21.3" y2="16.1" stroke="#000" stroke-width="1.25" stroke-linecap="round"/><polygon points="12.2,10.8 21.3,6.6 21.3,16.1 12.2,21.2" fill="url(#gc)" stroke="#0a7a0a" stroke-width=".5"/></svg></div><div class="vbtn" style="left:288px;top:113px"><svg width="24" height="24" viewBox="0 0 24 24"><line x1="12.2" y1="3.2" x2="21.3" y2="6.6" stroke="#000" stroke-width="1.25" stroke-linecap="round"/><line x1="21.3" y1="6.6" x2="21.3" y2="16.1" stroke="#000" stroke-width="1.25" stroke-linecap="round"/><line x1="21.3" y1="16.1" x2="12.2" y2="21.2" stroke="#000" stroke-width="1.25" stroke-linecap="round"/><line x1="12.2" y1="21.2" x2="3.2" y2="16.4" stroke="#000" stroke-width="1.25" stroke-linecap="round"/><line x1="3.2" y1="16.4" x2="3.2" y2="6.8" stroke="#000" stroke-width="1.25" stroke-linecap="round"/><line x1="3.2" y1="6.8" x2="12.2" y2="3.2" stroke="#000" stroke-width="1.25" stroke-linecap="round"/><line x1="12.2" y1="10.8" x2="3.2" y2="6.8" stroke="#000" stroke-width="1.25" stroke-linecap="round"/><line x1="12.2" y1="10.8" x2="21.3" y2="6.6" stroke="#000" stroke-width="1.25" stroke-linecap="round"/><line x1="12.2" y1="10.8" x2="12.2" y2="21.2" stroke="#000" stroke-width="1.25" stroke-linecap="round"/><line x1="12.2" y1="10.8" x2="12.2" y2="3.2" stroke="#000" stroke-width="1.25" stroke-linecap="round"/><line x1="12.2" y1="10.8" x2="3.2" y2="16.4" stroke="#000" stroke-width="1.25" stroke-linecap="round"/><line x1="12.2" y1="10.8" x2="21.3" y2="16.1" stroke="#000" stroke-width="1.25" stroke-linecap="round"/><polygon points="3.2,6.8 12.2,10.8 12.2,21.2 3.2,16.4" fill="url(#gc)" stroke="#0a7a0a" stroke-width=".5"/></svg></div><div class="vbtn" style="left:316px;top:113px"><svg width="24" height="24" viewBox="0 0 24 24"><polygon points="12.2,3.2 21.3,6.6 21.3,16.1 12.2,10.8" fill="url(#gc)"/><line x1="12.2" y1="3.2" x2="21.3" y2="6.6" stroke="#000" stroke-width="1.25" stroke-linecap="round"/><line x1="21.3" y1="6.6" x2="21.3" y2="16.1" stroke="#000" stroke-width="1.25" stroke-linecap="round"/><line x1="21.3" y1="16.1" x2="12.2" y2="21.2" stroke="#000" stroke-width="1.25" stroke-linecap="round"/><line x1="12.2" y1="21.2" x2="3.2" y2="16.4" stroke="#000" stroke-width="1.25" stroke-linecap="round"/><line x1="3.2" y1="16.4" x2="3.2" y2="6.8" stroke="#000" stroke-width="1.25" stroke-linecap="round"/><line x1="3.2" y1="6.8" x2="12.2" y2="3.2" stroke="#000" stroke-width="1.25" stroke-linecap="round"/><line x1="12.2" y1="10.8" x2="3.2" y2="6.8" stroke="#000" stroke-width="1.25" stroke-linecap="round"/><line x1="12.2" y1="10.8" x2="21.3" y2="6.6" stroke="#000" stroke-width="1.25" stroke-linecap="round"/><line x1="12.2" y1="10.8" x2="12.2" y2="21.2" stroke="#000" stroke-width="1.25" stroke-linecap="round"/><line x1="12.2" y1="10.8" x2="12.2" y2="3.2" stroke="#000" stroke-width="1.25" stroke-linecap="round"/><line x1="12.2" y1="10.8" x2="3.2" y2="16.4" stroke="#000" stroke-width="1.25" stroke-linecap="round"/><line x1="12.2" y1="10.8" x2="21.3" y2="16.1" stroke="#000" stroke-width="1.25" stroke-linecap="round"/></svg></div><div class="vbtn" style="left:344px;top:113px"><svg width="24" height="24" viewBox="0 0 24 24"><polygon points="12.2,3.2 21.3,6.6 12.2,10.8 3.2,6.8" fill="#7af04a"/><polygon points="3.2,6.8 12.2,10.8 12.2,21.2 3.2,16.4" fill="#22c818"/><polygon points="12.2,10.8 21.3,6.6 21.3,16.1 12.2,21.2" fill="#0c8c0c"/><path d="M12.2 3.2 L21.3 6.6 V16.1 L12.2 21.2 L3.2 16.4 V6.8z M3.2 6.8 L12.2 10.8 L21.3 6.6 M12.2 10.8 V21.2" fill="none" stroke="#064a06" stroke-width=".8"/></svg></div><div class="vbtn" style="left:64px;top:141px"><svg width="24" height="24" viewBox="0 0 24 24"><path d="M7.6 6.288 v11.424 a5.2 2.2880000000000003 0 0 0 10.4 0 v-11.424 a5.2 2.2880000000000003 0 0 0 -10.4 0z" fill="none" stroke="#1a1a1a" stroke-width="1"/><ellipse cx="12.8" cy="6.288" rx="5.2" ry="2.2880000000000003" fill="none" stroke="#1a1a1a" stroke-width="1"/><path d="M7.6 17.712 a5.2 2.2880000000000003 0 0 1 10.4 0" fill="none" stroke="#1a1a1a" stroke-width="0.7"/></svg></div><div class="vbtn" style="left:64px;top:169px"><svg width="24" height="24" viewBox="0 0 24 24"><path d="M7.6 6.288 v11.424 a5.2 2.2880000000000003 0 0 0 10.4 0 v-11.424 a5.2 2.2880000000000003 0 0 0 -10.4 0z" fill="none" stroke="#1a1a1a" stroke-width="1"/><ellipse cx="12.8" cy="6.288" rx="5.2" ry="2.2880000000000003" fill="none" stroke="#1a1a1a" stroke-width="1"/></svg></div><div class="vbtn on" style="left:64px;top:197px"><svg width="24" height="24" viewBox="0 0 24 24"><path d="M7.8 6.288 v11.424 a5.2 2.2880000000000003 0 0 0 10.4 0 v-11.424 a5.2 2.2880000000000003 0 0 0 -10.4 0z" fill="url(#gb2)" stroke="#24386c" stroke-width="1.0"/><ellipse cx="13.0" cy="6.288" rx="5.2" ry="2.2880000000000003" fill="#6a98e4" stroke="#24386c" stroke-width="1.0"/></svg></div><div class="vbtn" style="left:64px;top:225px"><svg width="24" height="24" viewBox="0 0 24 24"><path d="M7.8 6.288 v11.424 a5.2 2.2880000000000003 0 0 0 10.4 0 v-11.424 a5.2 2.2880000000000003 0 0 0 -10.4 0z" fill="url(#gl)" stroke="#55607c" stroke-width="1"/><ellipse cx="13.0" cy="6.288" rx="5.2" ry="2.2880000000000003" fill="#e8f0fc" stroke="#55607c" stroke-width="1"/></svg></div><div class="vbtn" style="left:64px;top:253px"><svg width="24" height="24" viewBox="0 0 24 24"><path d="M7.8 6.288 v11.424 a5.2 2.2880000000000003 0 0 0 10.4 0 v-11.424 a5.2 2.2880000000000003 0 0 0 -10.4 0z" fill="#9a9eac" stroke="#222" stroke-width="1.1"/><ellipse cx="13.0" cy="6.288" rx="5.2" ry="2.2880000000000003" fill="#9a9eac" stroke="#222" stroke-width="1.1"/><path d="M9.4 7 l1.6 11 M11.6 7.4 l2.6 10 M14.6 7 l-1.4 11 M15.4 8 l-3.4 5" stroke="#222" stroke-width=".7" fill="none"/></svg></div><svg class="abs" style="left:884px;top:500px" width="60" height="45" viewBox="0 0 60 45"><defs><linearGradient id="wm" x1="0" x2="0" y1="1" y2="0"><stop offset="0" stop-color="#fab41a"/><stop offset=".45" stop-color="#f58a1e"/><stop offset="1" stop-color="#f06a20"/></linearGradient><linearGradient id="wm2" x1="0" x2="1" y1="0" y2="1"><stop offset="0" stop-color="#fbb818"/><stop offset="1" stop-color="#f0701e"/></linearGradient></defs><g fill="url(#wm)"><path d="M6.9 39.9 V18.2 L9.3 17 V37.5 H26 q3.4 .2 3.8 2.4z"/><path d="M10.7 36.4 V13.2 L13.3 11.8 V34.4 q8.400 .4 13.400 3.200 h-4.200 q-5.600 -1.700 -12.500 -1.200z"/><path d="M15 33.4 V9.200 L17.600 7.800 V31.400 q7.200 1.700 10.800 6.200 h-3.200 q-3.200 -3.400 -10.200 -4.200z"/><g transform="translate(59.500 0) scale(-1 1)"><path d="M6.9 39.9 V18.2 L9.3 17 V37.5 H26 q3.4 .2 3.8 2.4z"/><path d="M10.7 36.4 V13.2 L13.3 11.8 V34.4 q8.400 .4 13.400 3.200 h-4.200 q-5.600 -1.700 -12.500 -1.200z"/><path d="M15 33.4 V9.200 L17.600 7.800 V31.400 q7.200 1.700 10.800 6.200 h-3.200 q-3.200 -3.400 -10.200 -4.200z"/></g></g><path d="M30 10.300 C22 10.500 19.500 18 20.400 23 C21 28 24 31.500 26.500 33 C23 28 22.500 21 25.500 18 C27 16.300 29 15.800 30 15.800z" fill="url(#wm2)"/><path d="M28.600 10.300 h1.700 V27 C33 28.800 37.600 26.600 36 19 C40 22 39.600 30 34 34 C32 35.500 30 36 28.600 35.600z" fill="url(#wm2)"/><path d="M25 38 h9.500 v1.900 h-9.500z" fill="#f47a1c"/></svg><div class="abs" style="left:946px;top:512.6px;font-size:16.8px;font-weight:500;line-height:22px;color:#f48a1c;white-space:nowrap;letter-spacing:0;transform:scaleY(1.07);transform-origin:0 0">智造资料网</div><div class="abs" style="left:947px;top:532.5px;font-size:4.3px;line-height:6px;font-weight:bold;color:#f48a1c;white-space:nowrap;letter-spacing:.1px">INTELLIGENT MANUFACTURING DATA</div><svg class="abs" style="left:56px;top:934px" width="76" height="68" viewBox="56 934 76 68"><defs><linearGradient id="ga2" x1="0" x2="0" y1="0" y2="1"><stop offset="0" stop-color="#30ff30"/><stop offset=".55" stop-color="#00e000"/><stop offset="1" stop-color="#006a00"/></linearGradient></defs><rect x="118.600" y="947" width="2.800" height="55" fill="#00e6ee"/><rect x="94.400" y="945" width="25" height="22.800" fill="#6a7a9c" fill-opacity=".75" stroke="#d8d4cc" stroke-width="1"/><path d="M93 944.600 h26" stroke="#f0f000" stroke-width="1.400"/><path d="M70 942.400 l10 -4.600 v2.800 h38 v3.800 h-38 v2.800z" fill="url(#ga2)"/><circle cx="119.800" cy="941.400" r="3.600" fill="#8a8a8a"/><circle cx="119" cy="945" r="4" fill="#d00808"/><path d="M116 944 a4 4 0 0 1 6 -2.400 l-3 3.400z" fill="#f01818"/><path d="M114.400 950.600 l7 -8 M114.400 941.600 l7.600 9" stroke="#e0dcd4" stroke-width=".9"/><text x="59.400" y="946.400" font-size="10.500" font-family="Liberation Sans,sans-serif" fill="#f01010">Y</text></svg>
<div id="status" class="abs"><div class="abs" style="left:2px;top:20px;width:1916px;height:1px;background:#a4a6ac"></div><div class="abs" style="left:1336px;top:4px;width:4px;height:14px;background:repeating-linear-gradient(to bottom,#b4bacb 0 1px,transparent 1px 2px) 0 0/1px 100% no-repeat,repeating-linear-gradient(to bottom,transparent 0 1px,#b4bacb 1px 2px) 1px 0/1px 100% no-repeat,repeating-linear-gradient(to bottom,#b4bacb 0 1px,transparent 1px 2px) 2px 0/1px 100% no-repeat,repeating-linear-gradient(to bottom,transparent 0 1px,#b4bacb 1px 2px) 3px 0/1px 100% no-repeat"></div><div class="abs" style="left:1475px;top:4px;width:4px;height:14px;background:repeating-linear-gradient(to bottom,#b4bacb 0 1px,transparent 1px 2px) 0 0/1px 100% no-repeat,repeating-linear-gradient(to bottom,transparent 0 1px,#b4bacb 1px 2px) 1px 0/1px 100% no-repeat,repeating-linear-gradient(to bottom,#b4bacb 0 1px,transparent 1px 2px) 2px 0/1px 100% no-repeat,repeating-linear-gradient(to bottom,transparent 0 1px,#b4bacb 1px 2px) 3px 0/1px 100% no-repeat"></div><div class="abs" style="left:1341px;top:3px;width:130px;height:17px;background:#fff"></div><svg class="abs" style="left:1460px;top:5px" width="12" height="12" viewBox="0 0 12 12"><circle cx="5" cy="5" r="3.600" fill="none" stroke="#5a7ab4" stroke-width="1.200"/><path d="M7.600 7.600 l3 3" stroke="#5a7ab4" stroke-width="1.400"/></svg><div class="t" style="left:1487px;top:4px;">绝对 XY 上视图</div><div class="sep" style="left:1592px;top:3px"></div><div class="t" style="left:1601px;top:4px;">绝对视图</div><div class="abs" style="left:1656px;top:4px;width:4px;height:14px;background:repeating-linear-gradient(to bottom,#b4bacb 0 1px,transparent 1px 2px) 0 0/1px 100% no-repeat,repeating-linear-gradient(to bottom,transparent 0 1px,#b4bacb 1px 2px) 1px 0/1px 100% no-repeat,repeating-linear-gradient(to bottom,#b4bacb 0 1px,transparent 1px 2px) 2px 0/1px 100% no-repeat,repeating-linear-gradient(to bottom,transparent 0 1px,#b4bacb 1px 2px) 3px 0/1px 100% no-repeat"></div><div class="t" style="left:1668px;top:4px;font-weight:bold;letter-spacing:-.2px">LAYER0</div><div class="sep" style="left:1726px;top:3px"></div><div class="sep" style="left:1757px;top:3px"></div><div class="abs" style="left:1761px;top:4px;width:34px;height:14px;background:#45638f;border:1px solid #e4e8f2"></div><div class="sep" style="left:1800px;top:3px"></div><div class="abs" style="left:1804px;top:4px;width:34px;height:14px;background:#45638f;border:1px solid #e4e8f2"></div><div class="sep" style="left:1843px;top:3px"></div><div class="abs" style="left:1847px;top:4px;width:34px;height:14px;background:#45638f;border:1px solid #e4e8f2"></div><div class="sep" style="left:1886px;top:3px"></div><svg class="abs" style="left:1893px;top:2px" width="16" height="16" viewBox="0 0 16 16"><circle cx="8" cy="8" r="6" fill="#0a18e8" stroke="#05083c" stroke-width=".9"/><path d="M4 4 q3 -2 5 0 q1 2 -1 3 q-2 2 -1 5 q-3 -1 -4 -4z M11 6 q3 1 3 3 q-1 3 -3 3 q-1 -2 0 -3z" fill="#10d818"/><ellipse cx="5.600" cy="4.400" rx="2" ry="1.100" fill="#fff" opacity=".55"/></svg><div class="sep" style="left:1132px;top:24px"></div><div class="t" style="left:1141px;top:24.5px;">拴牢</div><div class="abs" style="left:1212px;top:21px;width:17px;height:19px;background:#ffe58a"></div><div class="abs" style="left:1336px;top:21px;width:17px;height:19px;background:#ffe58a"></div><svg class="abs" style="left:1181px;top:22px" width="18" height="18" viewBox="0 0 18 18"><rect x="1.500" y="1.500" width="15" height="15" fill="#dcc8d4" stroke="#6a7088" stroke-width="1.400"/><path d="M5 8 a4.400 4.400 0 0 1 8 -1.600 M13 10 a4.400 4.400 0 0 1 -8 1.600" fill="none" stroke="#d02038" stroke-width="1.800"/></svg><div class="sep" style="left:1175px;top:24px"></div><svg class="abs" style="left:1212px;top:22px" width="18" height="18" viewBox="0 0 18 18"><path d="M2 2 l5 1 l-1 3 l4 -1 l-2 4 l-4 -1z" fill="#e8a0e0" stroke="#a040a0" stroke-width=".6"/><path d="M8 8 l7 7" stroke="#c08828" stroke-width="2.600"/><path d="M3 12 l2 -3 l3 2z M12 3 l3 1 l-2 2z" fill="#f0e020" stroke="#a08800" stroke-width=".5"/></svg><div class="sep" style="left:1206px;top:24px"></div><svg class="abs" style="left:1243px;top:22px" width="18" height="18" viewBox="0 0 18 18"><path d="M2 16 v-8 l5 -3 l5 3 v8z" fill="#e8eef8" stroke="#3a5aa8" stroke-width="1"/><rect x="5" y="10" width="4" height="4" fill="#3a5aa8"/><path d="M9 6 q3 -5 8 -4 l-1 4 q-4 0 -5 3z" fill="#e8b070" stroke="#8a5a20" stroke-width=".7"/></svg><div class="sep" style="left:1237px;top:24px"></div><svg class="abs" style="left:1274px;top:22px" width="18" height="18" viewBox="0 0 18 18"><text x="9" y="15" font-size="17" font-weight="bold" text-anchor="middle" font-family="Liberation Sans,sans-serif" fill="#3a68c8" stroke="#1c3478" stroke-width=".4">?</text></svg><div class="sep" style="left:1268px;top:24px"></div><svg class="abs" style="left:1305px;top:22px" width="18" height="18" viewBox="0 0 18 18"><g transform="translate(6 5) scale(0.9)"><path d="M0 3 l5 -3 l6 2 l-5 3z" fill="#a8c8f0" stroke="#333" stroke-width=".7"/><path d="M0 3 l6 2 v7 l-6 -2.4z" fill="#5a8ac8" stroke="#333" stroke-width=".7"/><path d="M6 5 l5 -3 v6.6 l-5 3.4z" fill="#2a4a88" stroke="#333" stroke-width=".7"/></g><path d="M1 5 h7 M1 9 l6 2 M2 14 l6 -2" stroke="#e01818" stroke-width="1.500"/><g transform="translate(3 0) scale(0.6)"><path d="M0 3 l5 -3 l6 2 l-5 3z" fill="#a8c8f0" stroke="#333" stroke-width=".7"/><path d="M0 3 l6 2 v7 l-6 -2.4z" fill="#5a8ac8" stroke="#333" stroke-width=".7"/><path d="M6 5 l5 -3 v6.6 l-5 3.4z" fill="#2a4a88" stroke="#333" stroke-width=".7"/></g></svg><div class="sep" style="left:1299px;top:24px"></div><svg class="abs" style="left:1336px;top:22px" width="18" height="18" viewBox="0 0 18 18"><path d="M2 5 l7 -3 l7 3 l-7 3z" fill="#e040e0" stroke="#333" stroke-width=".7"/><path d="M2 5 l7 3 v8 l-7 -3z" fill="#6ab0e8" stroke="#333" stroke-width=".7"/><path d="M9 8 l7 -3 v8 l-7 3z" fill="#3a78c0" stroke="#333" stroke-width=".7"/></svg><div class="sep" style="left:1330px;top:24px"></div><div class="sep" style="left:1361px;top:24px"></div><svg class="abs" style="left:1366px;top:30px" width="80" height="10" viewBox="0 0 80 10"><rect x="3" y="-6" width="12" height="12" fill="#f4f4f4" stroke="#555" stroke-width="1.200"/><path d="M5 3 h8" stroke="#555" stroke-width="1"/><circle cx="40" cy="-2" r="8" fill="#fff" stroke="#2a9a2a" stroke-width="2.200"/><path d="M40 -6 v5" stroke="#222" stroke-width="1.400"/><rect x="64" y="-6" width="14" height="12" fill="#f4f4f4" stroke="#555" stroke-width="1.200"/><path d="M71 -6 v12" stroke="#555" stroke-width="1"/></svg><div class="sep" style="left:1388px;top:26px"></div><div class="sep" style="left:1423px;top:26px"></div><div class="sep" style="left:1452px;top:26px"></div><div class="t" style="left:1463px;top:24px;letter-spacing:-.05px">LS: 1.00 PS: 1.00</div><div class="sep" style="left:1580px;top:24px"></div><div class="t" style="left:1589px;top:24px;">单位: 毫米</div><div class="sep" style="left:1654px;top:24px"></div><div class="t" style="left:1663px;top:24px;font-size:12.600px;letter-spacing:.14px;word-spacing:.3px"><span style="color:#f01010">X =-3047.717</span> Y = 1126.411 Z = 0000.000</div><div class="abs" style="left:1361px;top:9px;width:204px;height:24px;background:#fff;border:1px solid #d4d8e0;border-radius:2px;box-shadow:0 0 2px rgba(0,0,0,.25)"></div><svg class="abs" style="left:1356px;top:5px" width="212" height="32" viewBox="0 0 212 32"><path d="M3.600 8.400 q0 -3 3 -3.600 l17 -3.200 q3 -.4 3.400 2.600 l2.400 17 q.4 3 -2.600 3.600 l-16 3 q-3 .4 -3.600 -2.600z" fill="#f4581c"/><path d="M22.500 8.200 q-6.500 -3.400 -10.500 -.2 q-2.600 3 1.600 5 l5.600 2 q2.400 1.200 .4 2.800 q-3.400 1.800 -9.200 -1" fill="none" stroke="#fff" stroke-width="2.700" stroke-linecap="round"/><path d="M37.600 22.600 L43.400 9.800 L49.200 22.600 M39.800 18.200 h7.200" fill="none" stroke="#2a7ae2" stroke-width="1.900" stroke-linejoin="round"/><circle cx="62.800" cy="12.800" r="1.700" fill="#2a7ae2"/><circle cx="68.800" cy="16" r="1.500" fill="#2a7ae2"/><path d="M69.600 16.400 q.6 2.600 -1.800 4.200" fill="none" stroke="#2a7ae2" stroke-width="1.500" stroke-linecap="round"/><circle cx="88" cy="16" r="7.300" fill="none" stroke="#2a7ae2" stroke-width="1.600"/><circle cx="85.400" cy="13.800" r="1.100" fill="#2a7ae2"/><circle cx="90.600" cy="13.800" r="1.100" fill="#2a7ae2"/><path d="M84.400 18 q3.600 3.400 7.200 0" fill="none" stroke="#2a7ae2" stroke-width="1.400"/><rect x="107" y="7.600" width="5.600" height="11" rx="2.800" fill="#2a7ae2"/><path d="M104.400 15 q0 5.600 5.400 5.600 q5.400 0 5.400 -5.600 M109.800 20.600 v3.400" fill="none" stroke="#2a7ae2" stroke-width="1.600"/><rect x="124" y="10" width="16.400" height="11.400" rx="1.600" fill="#2a7ae2"/><path d="M126.400 13 h11.600 M126.400 15.600 h11.600 M128.600 18.600 h7.200" stroke="#fff" stroke-width="1.300" stroke-dasharray="1.700 1.200"/><circle cx="157" cy="11.600" r="3.400" fill="#c4c8d0"/><path d="M150.400 23 q0 -7 6.600 -7 q6.600 0 6.600 7z" fill="#c4c8d0"/><rect x="158.600" y="17" width="7.400" height="7" rx="1" fill="#c4c8d0" stroke="#fff" stroke-width=".8"/><path d="M171.600 11 l4.600 -3 q2.200 1.800 4.400 0 l4.600 3 l-2.200 3.600 l-1.900 -1 v9.400 h-9.400 v-9.400 l-1.900 1z" fill="#2a7ae2"/><rect x="191.600" y="10.400" width="5.400" height="5.400" rx=".8" fill="#2a7ae2"/><rect x="199.200" y="10.900" width="4.500" height="4.500" rx=".8" fill="none" stroke="#2a7ae2" stroke-width="1.200"/><rect x="191.600" y="17.600" width="5.400" height="5.400" rx=".8" fill="#2a7ae2"/><rect x="198.700" y="17.600" width="5.400" height="5.400" rx=".8" fill="#2a7ae2"/></svg></div>
<div id="taskbar" class="abs"><div class="abs" style="left:48px;top:0;width:344px;height:8px;background:#f0f0f0;border-top:1px solid #c8c8c8"></div><div class="abs" style="left:589px;top:0;width:48px;height:8px;background:#4a4a4a"></div><div class="abs" style="left:1915px;top:0;width:1px;height:8px;background:#8a8a8a"></div><div class="abs" style="left:1815px;top:4px;font-size:12px;line-height:12px;color:#fff;white-space:nowrap">12:09</div></div>
</body>
</html>
